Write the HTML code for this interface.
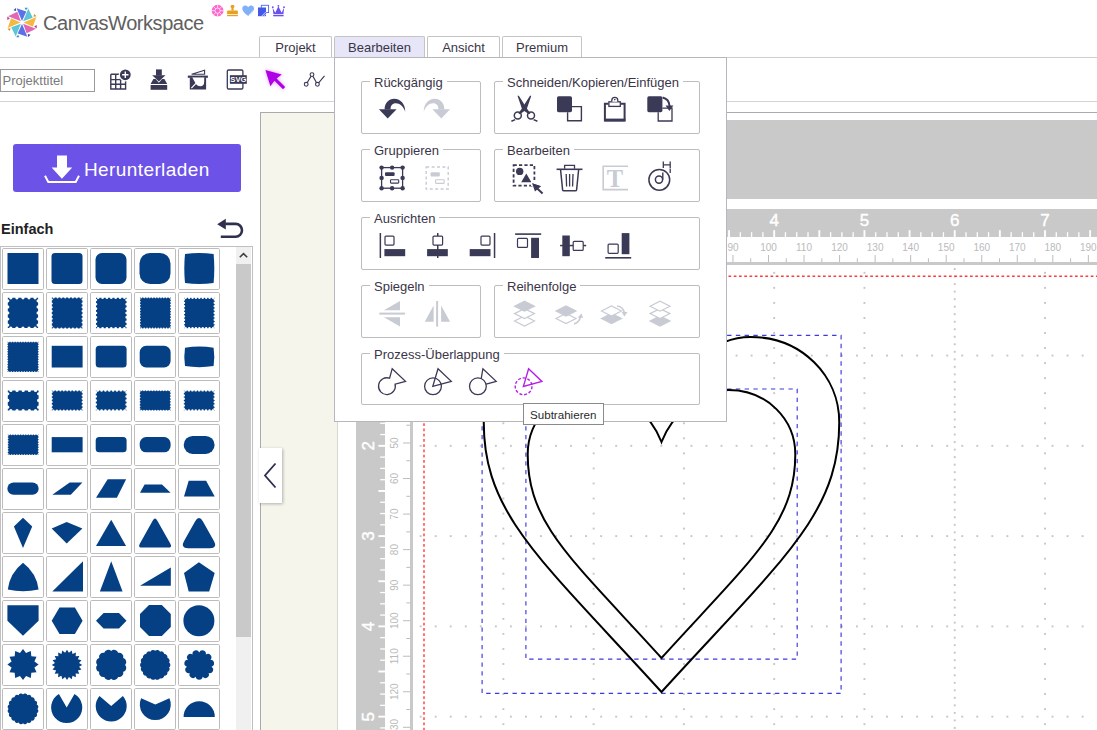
<!DOCTYPE html><html><head><meta charset="utf-8"><style>
*{margin:0;padding:0;box-sizing:border-box}
html,body{width:1097px;height:730px;overflow:hidden;background:#fff;font-family:"Liberation Sans",sans-serif}
.a{position:absolute}
svg{position:absolute;overflow:visible}
.tab{position:absolute;top:36px;height:21px;border:1px solid #c4c4c4;border-bottom:none;border-radius:2px 2px 0 0;background:#fff;font-size:13px;color:#3b3548;text-align:center;line-height:21px}
.grp{position:absolute;border:1px solid #bdbdbd;border-radius:2px}
.gl{position:absolute;background:#fff;font-size:13px;color:#3b3548;padding:0 4px;line-height:14px;white-space:nowrap}
.cell{position:absolute;width:42px;height:41px;border:1px solid #c4c4c4;background:#fff}
</style></head><body>

<svg class="a" style="left:0;top:0" width="45" height="45"><g transform="translate(22,22.5)"><polygon points="-5.40,-14.30 4.30,-10.90 0.00,-1.60" fill="#5a72e8"/><polygon points="-8.60,-12.20 -6.20,-14.60 -5.80,-11.40" fill="#3c4aa8"/><polygon points="6.29,-13.93 10.75,-4.67 1.13,-1.13" fill="#5ec4d8"/><polygon points="2.55,-14.71 5.94,-14.71 3.96,-12.16" fill="#3d9aa8"/><polygon points="14.30,-5.40 10.90,4.30 1.60,-0.00" fill="#f6b840"/><polygon points="12.20,-8.60 14.60,-6.20 11.40,-5.80" fill="#d88f2a"/><polygon points="13.93,6.29 4.67,10.75 1.13,1.13" fill="#e167b6"/><polygon points="14.71,2.55 14.71,5.94 12.16,3.96" fill="#b0389a"/><polygon points="5.40,14.30 -4.30,10.90 0.00,1.60" fill="#5a72e8"/><polygon points="8.60,12.20 6.20,14.60 5.80,11.40" fill="#3c4aa8"/><polygon points="-6.29,13.93 -10.75,4.67 -1.13,1.13" fill="#5ec4d8"/><polygon points="-2.55,14.71 -5.94,14.71 -3.96,12.16" fill="#3d9aa8"/><polygon points="-14.30,5.40 -10.90,-4.30 -1.60,0.00" fill="#f6b840"/><polygon points="-12.20,8.60 -14.60,6.20 -11.40,5.80" fill="#d88f2a"/><polygon points="-13.93,-6.29 -4.67,-10.75 -1.13,-1.13" fill="#e167b6"/><polygon points="-14.71,-2.55 -14.71,-5.94 -12.16,-3.96" fill="#b0389a"/></g></svg>
<div class="a" style="left:43px;top:11px;font-size:20px;line-height:24px;color:#606060;letter-spacing:-0.45px;white-space:nowrap">CanvasWorkspace</div>
<svg class="a" style="left:0;top:0" width="300" height="22">
<circle cx="217.6" cy="10.7" r="5.9" fill="#ff66cc"/>
<g stroke="#fff" stroke-width="0.7" fill="none"><circle cx="217.6" cy="10.7" r="2.6"/><path d="M217.6 4.8 V8.1 M217.6 13.3 V16.6 M211.7 10.7 H215 M220.2 10.7 H223.5 M213.4 6.5 L215.8 8.9 M219.4 12.5 L221.8 14.9 M221.8 6.5 L219.4 8.9 M215.8 12.5 L213.4 14.9"/></g>
<g fill="#e8a020"><rect x="230.6" y="4.9" width="3.8" height="3.2" rx="1.4"/><path d="M231.4 8 H233.6 V10.6 H231.4Z"/><path d="M228.2 10.6 H236.8 Q237.9 10.6 237.9 11.7 V14 H227.1 V11.7 Q227.1 10.6 228.2 10.6Z"/><rect x="227.1" y="14.8" width="10.8" height="1.4"/></g>
<path d="M248.2 7.2 C246.8 4.6 242.3 4.6 242.3 8.4 C242.3 11.6 246 14 248.2 15.9 C250.4 14 254 11.6 254 8.4 C254 4.6 249.6 4.6 248.2 7.2Z" fill="#80b0f8"/>
<path d="M252.6 10.6 C252 12.4 250.6 13.6 248.8 15" stroke="#fff" stroke-width="0.6" fill="none"/>
<rect x="261.3" y="5.3" width="7.3" height="7.3" fill="none" stroke="#4f66f0" stroke-width="0.9"/>
<rect x="258" y="7.5" width="8" height="8.7" fill="#4458e8"/>
<path d="M261.8 16 L266 11.8 M263.8 16 L266 13.8" stroke="#fff" stroke-width="0.7"/>
<path d="M272.6 7.5 L275.2 12.8 L278.4 6.2 L281.6 12.8 L284.2 7.5 L283.4 14 H273.4 Z" fill="#6a4ef0"/><circle cx="272.8" cy="7.2" r="0.9" fill="#6a4ef0"/><circle cx="278.4" cy="5.8" r="0.9" fill="#6a4ef0"/><circle cx="284" cy="7.2" r="0.9" fill="#6a4ef0"/>
<rect x="273.2" y="14.8" width="10.4" height="1.5" fill="#6a4ef0"/>
</svg>
<div class="tab" style="left:259px;width:73px">Projekt</div>
<div class="tab" style="left:334px;width:91px;background:#e6e6f8">Bearbeiten</div>
<div class="tab" style="left:427px;width:73px">Ansicht</div>
<div class="tab" style="left:502px;width:80px">Premium</div>
<div class="a" style="left:0;top:57px;width:1097px;height:1px;background:#cfcfcf"></div>
<div class="a" style="left:0;top:69px;width:95px;height:23px;border:1px solid #9a9a9a;font-size:13px;color:#7a7a7a;padding-left:1.5px;line-height:21px">Projekttitel</div>
<div class="a" style="left:0;top:101px;width:1097px;height:1px;background:#d4d4d4"></div>
<svg class="a" style="left:0;top:0" width="340" height="100">
<defs><filter id="glow" x="-50%" y="-50%" width="200%" height="200%"><feGaussianBlur stdDeviation="2.2"/></filter></defs>
<g fill="#3a3956">
<path d="M110.8 79.6 V89 H125.6 V79.6 M110.8 74.3 H120.4 M110.8 74.3 V79.6 M110.8 79.6 H125.6 M110.8 84.3 H125.6 M115.7 74.3 V89 M120.6 74.3 V89" fill="none" stroke="#3a3956" stroke-width="1.4"/>
</g>
<circle cx="125.3" cy="74.8" r="6.6" fill="#fff"/>
<g fill="#3a3956"><circle cx="125.3" cy="74.8" r="5.4"/>
</g>
<path d="M125.3 71.6 V78 M122.1 74.8 H128.5" stroke="#fff" stroke-width="1.4"/>
<g fill="#3a3956">
<rect x="156" y="69.4" width="5.8" height="6.2"/>
<polygon points="152.2,75.2 165.5,75.2 158.85,81.4"/>
<polygon points="150.6,84 153.4,79 155.6,79 158.85,82.8 162.1,79 164.4,79 167.2,84"/>
<rect x="150.6" y="85" width="16.6" height="4.8"/>
</g>
<g>
<path d="M191.6 74.3 L204.6 70.2 L204.6 74.3 Z" fill="none" stroke="#3a3956" stroke-width="1.1"/>
<rect x="187.8" y="75.6" width="20.1" height="2.2" fill="#3a3956"/>
<rect x="189.8" y="77.6" width="16.3" height="11.9" fill="#3a3956"/>
<path d="M192.3 77.6 H204.2 V81.5 Q204.2 86.2 200.3 86.2 Q197.2 86.2 195.4 83 Z" fill="#fff"/>
<path d="M191.4 88.2 L196.4 82.8" stroke="#fff" stroke-width="1.2"/>
</g>
<rect x="227.3" y="70" width="15.6" height="19" rx="1.3" fill="none" stroke="#3a3956" stroke-width="1.3"/>
<rect x="229.9" y="75.2" width="16.9" height="8.6" fill="#3a3956"/>
<text x="238.35" y="82.3" font-size="7.6" font-weight="bold" fill="#fff" text-anchor="middle" font-family="Liberation Sans">SVG</text>
<g opacity="0.55" filter="url(#glow)"><polygon points="265.4,70.1 281.8,74.4 276.6,78.6 285.2,87 283,89.2 274.4,80.8 270.4,86.2" fill="#c850ff"/></g>
<polygon points="265.4,70.1 281.8,74.4 276.6,78.6 285.2,87 283,89.2 274.4,80.8 270.4,86.2" fill="#b000e6"/>
<path d="M306.2 84.3 L312 74.6 L317.4 84.3 L324.5 75.8" fill="none" stroke="#3a3956" stroke-width="1.15"/>
<g fill="#fff" stroke="#3a3956" stroke-width="1.1"><circle cx="306.2" cy="84.3" r="1.9"/><circle cx="312" cy="74.6" r="1.9"/><circle cx="317.4" cy="84.3" r="1.9"/></g>
</svg>
<div class="a" style="left:13px;top:144px;width:228px;height:48px;background:#6d52e8;border-radius:3px"></div>
<svg class="a" style="left:0;top:0" width="260" height="250">
<rect x="57" y="155.5" width="10" height="13" fill="#fff"/>
<polygon points="51.6,167.5 72.2,167.5 61.9,178.8" fill="#fff"/>
<path d="M45 175.8 L48.3 182 H75.7 L79 175.8" fill="none" stroke="#fff" stroke-width="2"/>
<path d="M225.2 223.9 H235.6 A6.4 6.4 0 0 1 235.6 236.7 H220.8" fill="none" stroke="#2f2f4f" stroke-width="2.6"/>
<polygon points="217.2,224.2 225.8,218.8 225.8,229.6" fill="#2f2f4f"/>
</svg>
<div class="a" style="left:84px;top:159px;font-size:19px;line-height:22px;color:#fff;letter-spacing:0.4px;white-space:nowrap">Herunterladen</div>
<div class="a" style="left:1px;top:221px;font-size:14.5px;line-height:17px;color:#222;font-weight:bold;white-space:nowrap">Einfach</div>
<div class="a" style="left:0;top:246px;width:253px;height:500px;border:1px solid #c0c0c0;background:#fff"></div>
<div class="a" style="left:236px;top:247px;width:15px;height:483px;background:#f0f0f0"></div>
<div class="a" style="left:236px;top:264px;width:15px;height:373px;background:#c9c9c9"></div>
<svg class="a" style="left:236px;top:247px" width="15" height="17"><path d="M3.8 10.3 L7.5 6.6 L11.2 10.3" fill="none" stroke="#404040" stroke-width="1.6"/></svg>
<svg class="a" style="left:0;top:0" width="260" height="730"><rect x="2.5" y="248.5" width="41" height="41" rx="1.2" fill="#fff" stroke="#bcbcbc" stroke-width="1"/><g transform="translate(2,248)" fill="#053f84"><rect x="5.5" y="5" width="31.0" height="31" rx="0"/></g><rect x="46.5" y="248.5" width="41" height="41" rx="1.2" fill="#fff" stroke="#bcbcbc" stroke-width="1"/><g transform="translate(46,248)" fill="#053f84"><rect x="5.5" y="5" width="31.0" height="31" rx="3.5"/></g><rect x="90.5" y="248.5" width="41" height="41" rx="1.2" fill="#fff" stroke="#bcbcbc" stroke-width="1"/><g transform="translate(90,248)" fill="#053f84"><rect x="5.5" y="5" width="31.0" height="31" rx="6.5"/></g><rect x="134.5" y="248.5" width="41" height="41" rx="1.2" fill="#fff" stroke="#bcbcbc" stroke-width="1"/><g transform="translate(134,248)" fill="#053f84"><rect x="5.5" y="5" width="31.0" height="31" rx="10.5"/></g><rect x="178.5" y="248.5" width="41" height="41" rx="1.2" fill="#fff" stroke="#bcbcbc" stroke-width="1"/><g transform="translate(178,248)" fill="#053f84"><path d="M7,6.1 Q21.3,3.9 35.6,6.1 Q37.0,20.55 35.6,35.0 Q21.3,37.2 7,35.0 Q5.6,20.55 7,6.1 Z"/></g><rect x="2.5" y="292.5" width="41" height="41" rx="1.2" fill="#fff" stroke="#bcbcbc" stroke-width="1"/><g transform="translate(2,292)" fill="#053f84"><path d="M5.8,5.8 L7.23,5.8 A1.6,1.6 0 0 0 10.43,5.8 L13.29,5.8 A1.6,1.6 0 0 0 16.49,5.8 L19.35,5.8 A1.6,1.6 0 0 0 22.55,5.8 L25.41,5.8 A1.6,1.6 0 0 0 28.61,5.8 L31.47,5.8 A1.6,1.6 0 0 0 34.67,5.8 L36.1,5.8 L36.1,7.23 A1.6,1.6 0 0 0 36.1,10.43 L36.1,13.29 A1.6,1.6 0 0 0 36.1,16.49 L36.1,19.35 A1.6,1.6 0 0 0 36.1,22.55 L36.1,25.41 A1.6,1.6 0 0 0 36.1,28.61 L36.1,31.47 A1.6,1.6 0 0 0 36.1,34.67 L36.1,36.1 L34.67,36.1 A1.6,1.6 0 0 0 31.47,36.1 L28.61,36.1 A1.6,1.6 0 0 0 25.41,36.1 L22.55,36.1 A1.6,1.6 0 0 0 19.35,36.1 L16.49,36.1 A1.6,1.6 0 0 0 13.29,36.1 L10.43,36.1 A1.6,1.6 0 0 0 7.23,36.1 L5.8,36.1 L5.8,34.67 A1.6,1.6 0 0 0 5.8,31.47 L5.8,28.61 A1.6,1.6 0 0 0 5.8,25.41 L5.8,22.55 A1.6,1.6 0 0 0 5.8,19.35 L5.8,16.49 A1.6,1.6 0 0 0 5.8,13.29 L5.8,10.43 A1.6,1.6 0 0 0 5.8,7.23 Z"/></g><rect x="46.5" y="292.5" width="41" height="41" rx="1.2" fill="#fff" stroke="#bcbcbc" stroke-width="1"/><g transform="translate(46,292)" fill="#053f84"><path d="M5.8,5.6 L6.72,5.6 A1.0,1.0 0 0 0 8.72,5.6 L10.56,5.6 A1.0,1.0 0 0 0 12.56,5.6 L14.39,5.6 A1.0,1.0 0 0 0 16.39,5.6 L18.23,5.6 A1.0,1.0 0 0 0 20.23,5.6 L22.07,5.6 A1.0,1.0 0 0 0 24.07,5.6 L25.91,5.6 A1.0,1.0 0 0 0 27.91,5.6 L29.74,5.6 A1.0,1.0 0 0 0 31.74,5.6 L33.58,5.6 A1.0,1.0 0 0 0 35.58,5.6 L36.5,5.6 L36.5,6.52 A1.0,1.0 0 0 0 36.5,8.52 L36.5,10.38 A1.0,1.0 0 0 0 36.5,12.38 L36.5,14.22 A1.0,1.0 0 0 0 36.5,16.23 L36.5,18.07 A1.0,1.0 0 0 0 36.5,20.07 L36.5,21.92 A1.0,1.0 0 0 0 36.5,23.92 L36.5,25.77 A1.0,1.0 0 0 0 36.5,27.77 L36.5,29.62 A1.0,1.0 0 0 0 36.5,31.62 L36.5,33.47 A1.0,1.0 0 0 0 36.5,35.47 L36.5,36.4 L35.58,36.4 A1.0,1.0 0 0 0 33.58,36.4 L31.74,36.4 A1.0,1.0 0 0 0 29.74,36.4 L27.91,36.4 A1.0,1.0 0 0 0 25.91,36.4 L24.07,36.4 A1.0,1.0 0 0 0 22.07,36.4 L20.23,36.4 A1.0,1.0 0 0 0 18.23,36.4 L16.39,36.4 A1.0,1.0 0 0 0 14.39,36.4 L12.56,36.4 A1.0,1.0 0 0 0 10.56,36.4 L8.72,36.4 A1.0,1.0 0 0 0 6.72,36.4 L5.8,36.4 L5.8,35.48 A1.0,1.0 0 0 0 5.8,33.48 L5.8,31.62 A1.0,1.0 0 0 0 5.8,29.62 L5.8,27.77 A1.0,1.0 0 0 0 5.8,25.77 L5.8,23.93 A1.0,1.0 0 0 0 5.8,21.93 L5.8,20.07 A1.0,1.0 0 0 0 5.8,18.07 L5.8,16.23 A1.0,1.0 0 0 0 5.8,14.23 L5.8,12.38 A1.0,1.0 0 0 0 5.8,10.38 L5.8,8.53 A1.0,1.0 0 0 0 5.8,6.53 Z"/></g><rect x="90.5" y="292.5" width="41" height="41" rx="1.2" fill="#fff" stroke="#bcbcbc" stroke-width="1"/><g transform="translate(90,292)" fill="#053f84"><path d="M6,5.8 L6.89,5.8 A1.3,1.3 0 0 0 9.49,5.8 L11.26,5.8 A1.3,1.3 0 0 0 13.86,5.8 L15.63,5.8 A1.3,1.3 0 0 0 18.23,5.8 L20.00,5.8 A1.3,1.3 0 0 0 22.60,5.8 L24.37,5.8 A1.3,1.3 0 0 0 26.97,5.8 L28.74,5.8 A1.3,1.3 0 0 0 31.34,5.8 L33.11,5.8 A1.3,1.3 0 0 0 35.71,5.8 L36.6,5.8 L36.6,6.67 A1.3,1.3 0 0 0 36.6,9.27 L36.6,11.01 A1.3,1.3 0 0 0 36.6,13.61 L36.6,15.36 A1.3,1.3 0 0 0 36.6,17.96 L36.6,19.70 A1.3,1.3 0 0 0 36.6,22.30 L36.6,24.04 A1.3,1.3 0 0 0 36.6,26.64 L36.6,28.39 A1.3,1.3 0 0 0 36.6,30.99 L36.6,32.73 A1.3,1.3 0 0 0 36.6,35.33 L36.6,36.2 L35.71,36.2 A1.3,1.3 0 0 0 33.11,36.2 L31.34,36.2 A1.3,1.3 0 0 0 28.74,36.2 L26.97,36.2 A1.3,1.3 0 0 0 24.37,36.2 L22.60,36.2 A1.3,1.3 0 0 0 20.00,36.2 L18.23,36.2 A1.3,1.3 0 0 0 15.63,36.2 L13.86,36.2 A1.3,1.3 0 0 0 11.26,36.2 L9.49,36.2 A1.3,1.3 0 0 0 6.89,36.2 L6,36.2 L6,35.33 A1.3,1.3 0 0 0 6,32.73 L6,30.99 A1.3,1.3 0 0 0 6,28.39 L6,26.64 A1.3,1.3 0 0 0 6,24.04 L6,22.30 A1.3,1.3 0 0 0 6,19.70 L6,17.96 A1.3,1.3 0 0 0 6,15.36 L6,13.61 A1.3,1.3 0 0 0 6,11.01 L6,9.27 A1.3,1.3 0 0 0 6,6.67 Z"/></g><rect x="134.5" y="292.5" width="41" height="41" rx="1.2" fill="#fff" stroke="#bcbcbc" stroke-width="1"/><g transform="translate(134,292)" fill="#053f84"><path d="M6,5.6 L6.60,5.6 A0.8,0.8 0 0 0 8.20,5.6 L9.40,5.6 A0.8,0.8 0 0 0 11.00,5.6 L12.20,5.6 A0.8,0.8 0 0 0 13.80,5.6 L15.00,5.6 A0.8,0.8 0 0 0 16.60,5.6 L17.80,5.6 A0.8,0.8 0 0 0 19.40,5.6 L20.60,5.6 A0.8,0.8 0 0 0 22.20,5.6 L23.40,5.6 A0.8,0.8 0 0 0 25.00,5.6 L26.20,5.6 A0.8,0.8 0 0 0 27.80,5.6 L29.00,5.6 A0.8,0.8 0 0 0 30.60,5.6 L31.80,5.6 A0.8,0.8 0 0 0 33.40,5.6 L34.60,5.6 A0.8,0.8 0 0 0 36.20,5.6 L36.8,5.6 L36.8,6.20 A0.8,0.8 0 0 0 36.8,7.80 L36.8,9.00 A0.8,0.8 0 0 0 36.8,10.60 L36.8,11.80 A0.8,0.8 0 0 0 36.8,13.40 L36.8,14.60 A0.8,0.8 0 0 0 36.8,16.20 L36.8,17.40 A0.8,0.8 0 0 0 36.8,19.00 L36.8,20.20 A0.8,0.8 0 0 0 36.8,21.80 L36.8,23.00 A0.8,0.8 0 0 0 36.8,24.60 L36.8,25.80 A0.8,0.8 0 0 0 36.8,27.40 L36.8,28.60 A0.8,0.8 0 0 0 36.8,30.20 L36.8,31.40 A0.8,0.8 0 0 0 36.8,33.00 L36.8,34.20 A0.8,0.8 0 0 0 36.8,35.80 L36.8,36.4 L36.20,36.4 A0.8,0.8 0 0 0 34.60,36.4 L33.40,36.4 A0.8,0.8 0 0 0 31.80,36.4 L30.60,36.4 A0.8,0.8 0 0 0 29.00,36.4 L27.80,36.4 A0.8,0.8 0 0 0 26.20,36.4 L25.00,36.4 A0.8,0.8 0 0 0 23.40,36.4 L22.20,36.4 A0.8,0.8 0 0 0 20.60,36.4 L19.40,36.4 A0.8,0.8 0 0 0 17.80,36.4 L16.60,36.4 A0.8,0.8 0 0 0 15.00,36.4 L13.80,36.4 A0.8,0.8 0 0 0 12.20,36.4 L11.00,36.4 A0.8,0.8 0 0 0 9.40,36.4 L8.20,36.4 A0.8,0.8 0 0 0 6.60,36.4 L6,36.4 L6,35.80 A0.8,0.8 0 0 0 6,34.20 L6,33.00 A0.8,0.8 0 0 0 6,31.40 L6,30.20 A0.8,0.8 0 0 0 6,28.60 L6,27.40 A0.8,0.8 0 0 0 6,25.80 L6,24.60 A0.8,0.8 0 0 0 6,23.00 L6,21.80 A0.8,0.8 0 0 0 6,20.20 L6,19.00 A0.8,0.8 0 0 0 6,17.40 L6,16.20 A0.8,0.8 0 0 0 6,14.60 L6,13.40 A0.8,0.8 0 0 0 6,11.80 L6,10.60 A0.8,0.8 0 0 0 6,9.00 L6,7.80 A0.8,0.8 0 0 0 6,6.20 Z"/></g><rect x="178.5" y="292.5" width="41" height="41" rx="1.2" fill="#fff" stroke="#bcbcbc" stroke-width="1"/><g transform="translate(178,292)" fill="#053f84"><path d="M6,5.8 L6.51,5.8 A1.2,1.2 0 0 0 8.91,5.8 L9.92,5.8 A1.2,1.2 0 0 0 12.32,5.8 L13.33,5.8 A1.2,1.2 0 0 0 15.73,5.8 L16.74,5.8 A1.2,1.2 0 0 0 19.14,5.8 L20.15,5.8 A1.2,1.2 0 0 0 22.55,5.8 L23.56,5.8 A1.2,1.2 0 0 0 25.96,5.8 L26.97,5.8 A1.2,1.2 0 0 0 29.37,5.8 L30.38,5.8 A1.2,1.2 0 0 0 32.78,5.8 L33.79,5.8 A1.2,1.2 0 0 0 36.19,5.8 L36.7,5.8 L36.7,6.29 A1.2,1.2 0 0 0 36.7,8.69 L36.7,9.67 A1.2,1.2 0 0 0 36.7,12.07 L36.7,13.04 A1.2,1.2 0 0 0 36.7,15.44 L36.7,16.42 A1.2,1.2 0 0 0 36.7,18.82 L36.7,19.80 A1.2,1.2 0 0 0 36.7,22.20 L36.7,23.18 A1.2,1.2 0 0 0 36.7,25.58 L36.7,26.56 A1.2,1.2 0 0 0 36.7,28.96 L36.7,29.93 A1.2,1.2 0 0 0 36.7,32.33 L36.7,33.31 A1.2,1.2 0 0 0 36.7,35.71 L36.7,36.2 L36.19,36.2 A1.2,1.2 0 0 0 33.79,36.2 L32.78,36.2 A1.2,1.2 0 0 0 30.38,36.2 L29.37,36.2 A1.2,1.2 0 0 0 26.97,36.2 L25.96,36.2 A1.2,1.2 0 0 0 23.56,36.2 L22.55,36.2 A1.2,1.2 0 0 0 20.15,36.2 L19.14,36.2 A1.2,1.2 0 0 0 16.74,36.2 L15.73,36.2 A1.2,1.2 0 0 0 13.33,36.2 L12.32,36.2 A1.2,1.2 0 0 0 9.92,36.2 L8.91,36.2 A1.2,1.2 0 0 0 6.51,36.2 L6,36.2 L6,35.71 A1.2,1.2 0 0 0 6,33.31 L6,32.33 A1.2,1.2 0 0 0 6,29.93 L6,28.96 A1.2,1.2 0 0 0 6,26.56 L6,25.58 A1.2,1.2 0 0 0 6,23.18 L6,22.20 A1.2,1.2 0 0 0 6,19.80 L6,18.82 A1.2,1.2 0 0 0 6,16.42 L6,15.44 A1.2,1.2 0 0 0 6,13.04 L6,12.07 A1.2,1.2 0 0 0 6,9.67 L6,8.69 A1.2,1.2 0 0 0 6,6.29 Z"/></g><rect x="2.5" y="336.5" width="41" height="41" rx="1.2" fill="#fff" stroke="#bcbcbc" stroke-width="1"/><g transform="translate(2,336)" fill="#053f84"><path d="M5.4,5.7 L5.90,5.7 A0.8,0.8 0 0 0 7.50,5.7 L8.50,5.7 A0.8,0.8 0 0 0 10.10,5.7 L11.10,5.7 A0.8,0.8 0 0 0 12.70,5.7 L13.70,5.7 A0.8,0.8 0 0 0 15.30,5.7 L16.30,5.7 A0.8,0.8 0 0 0 17.90,5.7 L18.90,5.7 A0.8,0.8 0 0 0 20.50,5.7 L21.50,5.7 A0.8,0.8 0 0 0 23.10,5.7 L24.10,5.7 A0.8,0.8 0 0 0 25.70,5.7 L26.70,5.7 A0.8,0.8 0 0 0 28.30,5.7 L29.30,5.7 A0.8,0.8 0 0 0 30.90,5.7 L31.90,5.7 A0.8,0.8 0 0 0 33.50,5.7 L34.50,5.7 A0.8,0.8 0 0 0 36.10,5.7 L36.6,5.7 L36.6,6.16 A0.8,0.8 0 0 0 36.6,7.76 L36.6,8.69 A0.8,0.8 0 0 0 36.6,10.29 L36.6,11.21 A0.8,0.8 0 0 0 36.6,12.81 L36.6,13.74 A0.8,0.8 0 0 0 36.6,15.34 L36.6,16.26 A0.8,0.8 0 0 0 36.6,17.86 L36.6,18.79 A0.8,0.8 0 0 0 36.6,20.39 L36.6,21.31 A0.8,0.8 0 0 0 36.6,22.91 L36.6,23.84 A0.8,0.8 0 0 0 36.6,25.44 L36.6,26.36 A0.8,0.8 0 0 0 36.6,27.96 L36.6,28.89 A0.8,0.8 0 0 0 36.6,30.49 L36.6,31.41 A0.8,0.8 0 0 0 36.6,33.01 L36.6,33.94 A0.8,0.8 0 0 0 36.6,35.54 L36.6,36 L36.10,36 A0.8,0.8 0 0 0 34.50,36 L33.50,36 A0.8,0.8 0 0 0 31.90,36 L30.90,36 A0.8,0.8 0 0 0 29.30,36 L28.30,36 A0.8,0.8 0 0 0 26.70,36 L25.70,36 A0.8,0.8 0 0 0 24.10,36 L23.10,36 A0.8,0.8 0 0 0 21.50,36 L20.50,36 A0.8,0.8 0 0 0 18.90,36 L17.90,36 A0.8,0.8 0 0 0 16.30,36 L15.30,36 A0.8,0.8 0 0 0 13.70,36 L12.70,36 A0.8,0.8 0 0 0 11.10,36 L10.10,36 A0.8,0.8 0 0 0 8.50,36 L7.50,36 A0.8,0.8 0 0 0 5.90,36 L5.4,36 L5.4,35.54 A0.8,0.8 0 0 0 5.4,33.94 L5.4,33.01 A0.8,0.8 0 0 0 5.4,31.41 L5.4,30.49 A0.8,0.8 0 0 0 5.4,28.89 L5.4,27.96 A0.8,0.8 0 0 0 5.4,26.36 L5.4,25.44 A0.8,0.8 0 0 0 5.4,23.84 L5.4,22.91 A0.8,0.8 0 0 0 5.4,21.31 L5.4,20.39 A0.8,0.8 0 0 0 5.4,18.79 L5.4,17.86 A0.8,0.8 0 0 0 5.4,16.26 L5.4,15.34 A0.8,0.8 0 0 0 5.4,13.74 L5.4,12.81 A0.8,0.8 0 0 0 5.4,11.21 L5.4,10.29 A0.8,0.8 0 0 0 5.4,8.69 L5.4,7.76 A0.8,0.8 0 0 0 5.4,6.16 Z"/></g><rect x="46.5" y="336.5" width="41" height="41" rx="1.2" fill="#fff" stroke="#bcbcbc" stroke-width="1"/><g transform="translate(46,336)" fill="#053f84"><rect x="5.7" y="9.8" width="30.900000000000002" height="21.7" rx="0"/></g><rect x="90.5" y="336.5" width="41" height="41" rx="1.2" fill="#fff" stroke="#bcbcbc" stroke-width="1"/><g transform="translate(90,336)" fill="#053f84"><rect x="5.7" y="9.8" width="30.900000000000002" height="21.7" rx="3.5"/></g><rect x="134.5" y="336.5" width="41" height="41" rx="1.2" fill="#fff" stroke="#bcbcbc" stroke-width="1"/><g transform="translate(134,336)" fill="#053f84"><rect x="5.7" y="9.8" width="30.900000000000002" height="21.7" rx="6.5"/></g><rect x="178.5" y="336.5" width="41" height="41" rx="1.2" fill="#fff" stroke="#bcbcbc" stroke-width="1"/><g transform="translate(178,336)" fill="#053f84"><path d="M7,11.7 Q21.3,9.5 35.6,11.7 Q37.0,20.9 35.6,30.099999999999998 Q21.3,32.3 7,30.099999999999998 Q5.6,20.9 7,11.7 Z"/></g><rect x="2.5" y="380.5" width="41" height="41" rx="1.2" fill="#fff" stroke="#bcbcbc" stroke-width="1"/><g transform="translate(2,380)" fill="#053f84"><path d="M5.8,10.4 L7.28,10.4 A1.6,1.6 0 0 0 10.48,10.4 L13.44,10.4 A1.6,1.6 0 0 0 16.64,10.4 L19.60,10.4 A1.6,1.6 0 0 0 22.80,10.4 L25.76,10.4 A1.6,1.6 0 0 0 28.96,10.4 L31.92,10.4 A1.6,1.6 0 0 0 35.12,10.4 L36.6,10.4 L36.6,12.15 A1.6,1.6 0 0 0 36.6,15.35 L36.6,18.85 A1.6,1.6 0 0 0 36.6,22.05 L36.6,25.55 A1.6,1.6 0 0 0 36.6,28.75 L36.6,30.5 L35.12,30.5 A1.6,1.6 0 0 0 31.92,30.5 L28.96,30.5 A1.6,1.6 0 0 0 25.76,30.5 L22.80,30.5 A1.6,1.6 0 0 0 19.60,30.5 L16.64,30.5 A1.6,1.6 0 0 0 13.44,30.5 L10.48,30.5 A1.6,1.6 0 0 0 7.28,30.5 L5.8,30.5 L5.8,28.75 A1.6,1.6 0 0 0 5.8,25.55 L5.8,22.05 A1.6,1.6 0 0 0 5.8,18.85 L5.8,15.35 A1.6,1.6 0 0 0 5.8,12.15 Z"/></g><rect x="46.5" y="380.5" width="41" height="41" rx="1.2" fill="#fff" stroke="#bcbcbc" stroke-width="1"/><g transform="translate(46,380)" fill="#053f84"><path d="M5.8,10.4 L6.51,10.4 A1.0,1.0 0 0 0 8.51,10.4 L9.93,10.4 A1.0,1.0 0 0 0 11.93,10.4 L13.36,10.4 A1.0,1.0 0 0 0 15.36,10.4 L16.78,10.4 A1.0,1.0 0 0 0 18.78,10.4 L20.20,10.4 A1.0,1.0 0 0 0 22.20,10.4 L23.62,10.4 A1.0,1.0 0 0 0 25.62,10.4 L27.04,10.4 A1.0,1.0 0 0 0 29.04,10.4 L30.47,10.4 A1.0,1.0 0 0 0 32.47,10.4 L33.89,10.4 A1.0,1.0 0 0 0 35.89,10.4 L36.6,10.4 L36.6,11.08 A1.0,1.0 0 0 0 36.6,13.08 L36.6,14.43 A1.0,1.0 0 0 0 36.6,16.43 L36.6,17.77 A1.0,1.0 0 0 0 36.6,19.77 L36.6,21.12 A1.0,1.0 0 0 0 36.6,23.12 L36.6,24.48 A1.0,1.0 0 0 0 36.6,26.48 L36.6,27.83 A1.0,1.0 0 0 0 36.6,29.83 L36.6,30.5 L35.89,30.5 A1.0,1.0 0 0 0 33.89,30.5 L32.47,30.5 A1.0,1.0 0 0 0 30.47,30.5 L29.04,30.5 A1.0,1.0 0 0 0 27.04,30.5 L25.62,30.5 A1.0,1.0 0 0 0 23.62,30.5 L22.20,30.5 A1.0,1.0 0 0 0 20.20,30.5 L18.78,30.5 A1.0,1.0 0 0 0 16.78,30.5 L15.36,30.5 A1.0,1.0 0 0 0 13.36,30.5 L11.93,30.5 A1.0,1.0 0 0 0 9.93,30.5 L8.51,30.5 A1.0,1.0 0 0 0 6.51,30.5 L5.8,30.5 L5.8,29.82 A1.0,1.0 0 0 0 5.8,27.82 L5.8,26.48 A1.0,1.0 0 0 0 5.8,24.48 L5.8,23.12 A1.0,1.0 0 0 0 5.8,21.12 L5.8,19.77 A1.0,1.0 0 0 0 5.8,17.77 L5.8,16.42 A1.0,1.0 0 0 0 5.8,14.42 L5.8,13.07 A1.0,1.0 0 0 0 5.8,11.07 Z"/></g><rect x="90.5" y="380.5" width="41" height="41" rx="1.2" fill="#fff" stroke="#bcbcbc" stroke-width="1"/><g transform="translate(90,380)" fill="#053f84"><path d="M5.8,10.4 L6.42,10.4 A1.3,1.3 0 0 0 9.03,10.4 L10.27,10.4 A1.3,1.3 0 0 0 12.88,10.4 L14.12,10.4 A1.3,1.3 0 0 0 16.73,10.4 L17.97,10.4 A1.3,1.3 0 0 0 20.57,10.4 L21.82,10.4 A1.3,1.3 0 0 0 24.43,10.4 L25.68,10.4 A1.3,1.3 0 0 0 28.28,10.4 L29.53,10.4 A1.3,1.3 0 0 0 32.12,10.4 L33.38,10.4 A1.3,1.3 0 0 0 35.97,10.4 L36.6,10.4 L36.6,11.11 A1.3,1.3 0 0 0 36.6,13.71 L36.6,15.13 A1.3,1.3 0 0 0 36.6,17.73 L36.6,19.15 A1.3,1.3 0 0 0 36.6,21.75 L36.6,23.17 A1.3,1.3 0 0 0 36.6,25.77 L36.6,27.19 A1.3,1.3 0 0 0 36.6,29.79 L36.6,30.5 L35.98,30.5 A1.3,1.3 0 0 0 33.38,30.5 L32.12,30.5 A1.3,1.3 0 0 0 29.53,30.5 L28.28,30.5 A1.3,1.3 0 0 0 25.68,30.5 L24.43,30.5 A1.3,1.3 0 0 0 21.82,30.5 L20.58,30.5 A1.3,1.3 0 0 0 17.98,30.5 L16.73,30.5 A1.3,1.3 0 0 0 14.12,30.5 L12.88,30.5 A1.3,1.3 0 0 0 10.27,30.5 L9.03,30.5 A1.3,1.3 0 0 0 6.43,30.5 L5.8,30.5 L5.8,29.79 A1.3,1.3 0 0 0 5.8,27.19 L5.8,25.77 A1.3,1.3 0 0 0 5.8,23.17 L5.8,21.75 A1.3,1.3 0 0 0 5.8,19.15 L5.8,17.73 A1.3,1.3 0 0 0 5.8,15.13 L5.8,13.71 A1.3,1.3 0 0 0 5.8,11.11 Z"/></g><rect x="134.5" y="380.5" width="41" height="41" rx="1.2" fill="#fff" stroke="#bcbcbc" stroke-width="1"/><g transform="translate(134,380)" fill="#053f84"><path d="M5.8,10.4 L6.40,10.4 A0.8,0.8 0 0 0 8.00,10.4 L9.20,10.4 A0.8,0.8 0 0 0 10.80,10.4 L12.00,10.4 A0.8,0.8 0 0 0 13.60,10.4 L14.80,10.4 A0.8,0.8 0 0 0 16.40,10.4 L17.60,10.4 A0.8,0.8 0 0 0 19.20,10.4 L20.40,10.4 A0.8,0.8 0 0 0 22.00,10.4 L23.20,10.4 A0.8,0.8 0 0 0 24.80,10.4 L26.00,10.4 A0.8,0.8 0 0 0 27.60,10.4 L28.80,10.4 A0.8,0.8 0 0 0 30.40,10.4 L31.60,10.4 A0.8,0.8 0 0 0 33.20,10.4 L34.40,10.4 A0.8,0.8 0 0 0 36.00,10.4 L36.6,10.4 L36.6,11.04 A0.8,0.8 0 0 0 36.6,12.64 L36.6,13.91 A0.8,0.8 0 0 0 36.6,15.51 L36.6,16.78 A0.8,0.8 0 0 0 36.6,18.38 L36.6,19.65 A0.8,0.8 0 0 0 36.6,21.25 L36.6,22.52 A0.8,0.8 0 0 0 36.6,24.12 L36.6,25.39 A0.8,0.8 0 0 0 36.6,26.99 L36.6,28.26 A0.8,0.8 0 0 0 36.6,29.86 L36.6,30.5 L36.00,30.5 A0.8,0.8 0 0 0 34.40,30.5 L33.20,30.5 A0.8,0.8 0 0 0 31.60,30.5 L30.40,30.5 A0.8,0.8 0 0 0 28.80,30.5 L27.60,30.5 A0.8,0.8 0 0 0 26.00,30.5 L24.80,30.5 A0.8,0.8 0 0 0 23.20,30.5 L22.00,30.5 A0.8,0.8 0 0 0 20.40,30.5 L19.20,30.5 A0.8,0.8 0 0 0 17.60,30.5 L16.40,30.5 A0.8,0.8 0 0 0 14.80,30.5 L13.60,30.5 A0.8,0.8 0 0 0 12.00,30.5 L10.80,30.5 A0.8,0.8 0 0 0 9.20,30.5 L8.00,30.5 A0.8,0.8 0 0 0 6.40,30.5 L5.8,30.5 L5.8,29.86 A0.8,0.8 0 0 0 5.8,28.26 L5.8,26.99 A0.8,0.8 0 0 0 5.8,25.39 L5.8,24.12 A0.8,0.8 0 0 0 5.8,22.52 L5.8,21.25 A0.8,0.8 0 0 0 5.8,19.65 L5.8,18.38 A0.8,0.8 0 0 0 5.8,16.78 L5.8,15.51 A0.8,0.8 0 0 0 5.8,13.91 L5.8,12.64 A0.8,0.8 0 0 0 5.8,11.04 Z"/></g><rect x="178.5" y="380.5" width="41" height="41" rx="1.2" fill="#fff" stroke="#bcbcbc" stroke-width="1"/><g transform="translate(178,380)" fill="#053f84"><path d="M5.8,10.4 L6.31,10.4 A1.2,1.2 0 0 0 8.71,10.4 L9.73,10.4 A1.2,1.2 0 0 0 12.13,10.4 L13.16,10.4 A1.2,1.2 0 0 0 15.56,10.4 L16.58,10.4 A1.2,1.2 0 0 0 18.98,10.4 L20.00,10.4 A1.2,1.2 0 0 0 22.40,10.4 L23.42,10.4 A1.2,1.2 0 0 0 25.82,10.4 L26.84,10.4 A1.2,1.2 0 0 0 29.24,10.4 L30.27,10.4 A1.2,1.2 0 0 0 32.67,10.4 L33.69,10.4 A1.2,1.2 0 0 0 36.09,10.4 L36.6,10.4 L36.6,10.88 A1.2,1.2 0 0 0 36.6,13.28 L36.6,14.23 A1.2,1.2 0 0 0 36.6,16.62 L36.6,17.57 A1.2,1.2 0 0 0 36.6,19.97 L36.6,20.93 A1.2,1.2 0 0 0 36.6,23.32 L36.6,24.28 A1.2,1.2 0 0 0 36.6,26.68 L36.6,27.63 A1.2,1.2 0 0 0 36.6,30.03 L36.6,30.5 L36.09,30.5 A1.2,1.2 0 0 0 33.69,30.5 L32.67,30.5 A1.2,1.2 0 0 0 30.27,30.5 L29.24,30.5 A1.2,1.2 0 0 0 26.84,30.5 L25.82,30.5 A1.2,1.2 0 0 0 23.42,30.5 L22.40,30.5 A1.2,1.2 0 0 0 20.00,30.5 L18.98,30.5 A1.2,1.2 0 0 0 16.58,30.5 L15.56,30.5 A1.2,1.2 0 0 0 13.16,30.5 L12.13,30.5 A1.2,1.2 0 0 0 9.73,30.5 L8.71,30.5 A1.2,1.2 0 0 0 6.31,30.5 L5.8,30.5 L5.8,30.02 A1.2,1.2 0 0 0 5.8,27.62 L5.8,26.68 A1.2,1.2 0 0 0 5.8,24.28 L5.8,23.32 A1.2,1.2 0 0 0 5.8,20.93 L5.8,19.97 A1.2,1.2 0 0 0 5.8,17.57 L5.8,16.62 A1.2,1.2 0 0 0 5.8,14.22 L5.8,13.27 A1.2,1.2 0 0 0 5.8,10.88 Z"/></g><rect x="2.5" y="424.5" width="41" height="41" rx="1.2" fill="#fff" stroke="#bcbcbc" stroke-width="1"/><g transform="translate(2,424)" fill="#053f84"><path d="M5.8,10.5 L6.28,10.5 A0.8,0.8 0 0 0 7.88,10.5 L8.85,10.5 A0.8,0.8 0 0 0 10.45,10.5 L11.42,10.5 A0.8,0.8 0 0 0 13.02,10.5 L13.98,10.5 A0.8,0.8 0 0 0 15.58,10.5 L16.55,10.5 A0.8,0.8 0 0 0 18.15,10.5 L19.12,10.5 A0.8,0.8 0 0 0 20.72,10.5 L21.68,10.5 A0.8,0.8 0 0 0 23.28,10.5 L24.25,10.5 A0.8,0.8 0 0 0 25.85,10.5 L26.82,10.5 A0.8,0.8 0 0 0 28.42,10.5 L29.38,10.5 A0.8,0.8 0 0 0 30.98,10.5 L31.95,10.5 A0.8,0.8 0 0 0 33.55,10.5 L34.52,10.5 A0.8,0.8 0 0 0 36.12,10.5 L36.6,10.5 L36.6,10.98 A0.8,0.8 0 0 0 36.6,12.58 L36.6,13.54 A0.8,0.8 0 0 0 36.6,15.14 L36.6,16.11 A0.8,0.8 0 0 0 36.6,17.71 L36.6,18.67 A0.8,0.8 0 0 0 36.6,20.27 L36.6,21.23 A0.8,0.8 0 0 0 36.6,22.83 L36.6,23.79 A0.8,0.8 0 0 0 36.6,25.39 L36.6,26.36 A0.8,0.8 0 0 0 36.6,27.96 L36.6,28.92 A0.8,0.8 0 0 0 36.6,30.52 L36.6,31 L36.12,31 A0.8,0.8 0 0 0 34.52,31 L33.55,31 A0.8,0.8 0 0 0 31.95,31 L30.98,31 A0.8,0.8 0 0 0 29.38,31 L28.42,31 A0.8,0.8 0 0 0 26.82,31 L25.85,31 A0.8,0.8 0 0 0 24.25,31 L23.28,31 A0.8,0.8 0 0 0 21.68,31 L20.72,31 A0.8,0.8 0 0 0 19.12,31 L18.15,31 A0.8,0.8 0 0 0 16.55,31 L15.58,31 A0.8,0.8 0 0 0 13.98,31 L13.02,31 A0.8,0.8 0 0 0 11.42,31 L10.45,31 A0.8,0.8 0 0 0 8.85,31 L7.88,31 A0.8,0.8 0 0 0 6.28,31 L5.8,31 L5.8,30.52 A0.8,0.8 0 0 0 5.8,28.92 L5.8,27.96 A0.8,0.8 0 0 0 5.8,26.36 L5.8,25.39 A0.8,0.8 0 0 0 5.8,23.79 L5.8,22.83 A0.8,0.8 0 0 0 5.8,21.23 L5.8,20.27 A0.8,0.8 0 0 0 5.8,18.67 L5.8,17.71 A0.8,0.8 0 0 0 5.8,16.11 L5.8,15.14 A0.8,0.8 0 0 0 5.8,13.54 L5.8,12.58 A0.8,0.8 0 0 0 5.8,10.98 Z"/></g><rect x="46.5" y="424.5" width="41" height="41" rx="1.2" fill="#fff" stroke="#bcbcbc" stroke-width="1"/><g transform="translate(46,424)" fill="#053f84"><rect x="5.7" y="13.1" width="30.900000000000002" height="15.200000000000001" rx="0"/></g><rect x="90.5" y="424.5" width="41" height="41" rx="1.2" fill="#fff" stroke="#bcbcbc" stroke-width="1"/><g transform="translate(90,424)" fill="#053f84"><rect x="5.7" y="13.1" width="30.900000000000002" height="15.200000000000001" rx="3.5"/></g><rect x="134.5" y="424.5" width="41" height="41" rx="1.2" fill="#fff" stroke="#bcbcbc" stroke-width="1"/><g transform="translate(134,424)" fill="#053f84"><rect x="5.7" y="13.1" width="30.900000000000002" height="15.200000000000001" rx="6.5"/></g><rect x="178.5" y="424.5" width="41" height="41" rx="1.2" fill="#fff" stroke="#bcbcbc" stroke-width="1"/><g transform="translate(178,424)" fill="#053f84"><rect x="5.7" y="11.9" width="30.900000000000002" height="18.0" rx="9"/></g><rect x="2.5" y="468.5" width="41" height="41" rx="1.2" fill="#fff" stroke="#bcbcbc" stroke-width="1"/><g transform="translate(2,468)" fill="#053f84"><rect x="5.4" y="14.5" width="31.200000000000003" height="12.3" rx="6.1"/></g><rect x="46.5" y="468.5" width="41" height="41" rx="1.2" fill="#fff" stroke="#bcbcbc" stroke-width="1"/><g transform="translate(46,468)" fill="#053f84"><polygon points="6.30,26.80 24.80,26.80 36.40,14.50 23.70,14.50"/></g><rect x="90.5" y="468.5" width="41" height="41" rx="1.2" fill="#fff" stroke="#bcbcbc" stroke-width="1"/><g transform="translate(90,468)" fill="#053f84"><polygon points="6.00,29.80 26.90,29.80 36.10,11.30 17.70,11.30"/></g><rect x="134.5" y="468.5" width="41" height="41" rx="1.2" fill="#fff" stroke="#bcbcbc" stroke-width="1"/><g transform="translate(134,468)" fill="#053f84"><polygon points="6.00,24.70 36.60,24.70 28.00,16.40 10.60,16.40"/></g><rect x="178.5" y="468.5" width="41" height="41" rx="1.2" fill="#fff" stroke="#bcbcbc" stroke-width="1"/><g transform="translate(178,468)" fill="#053f84"><polygon points="6.00,28.40 36.70,28.40 28.10,12.70 10.70,12.70"/></g><rect x="2.5" y="512.5" width="41" height="41" rx="1.2" fill="#fff" stroke="#bcbcbc" stroke-width="1"/><g transform="translate(2,512)" fill="#053f84"><polygon points="21.00,5.70 30.20,14.60 21.00,36.10 11.90,14.60"/></g><rect x="46.5" y="512.5" width="41" height="41" rx="1.2" fill="#fff" stroke="#bcbcbc" stroke-width="1"/><g transform="translate(46,512)" fill="#053f84"><polygon points="5.70,16.60 20.70,10.00 36.40,16.60 20.70,31.60"/></g><rect x="90.5" y="512.5" width="41" height="41" rx="1.2" fill="#fff" stroke="#bcbcbc" stroke-width="1"/><g transform="translate(90,512)" fill="#053f84"><polygon points="21.20,7.80 36.10,34.00 6.00,34.00"/></g><rect x="134.5" y="512.5" width="41" height="41" rx="1.2" fill="#fff" stroke="#bcbcbc" stroke-width="1"/><g transform="translate(134,512)" fill="#053f84"><path d="M18.80,8.52 Q21.00,4.60 23.22,8.51 L36.38,31.69 Q38.60,35.60 34.10,35.60 L8.10,35.60 Q3.60,35.60 5.80,31.68 Z"/></g><rect x="178.5" y="512.5" width="41" height="41" rx="1.2" fill="#fff" stroke="#bcbcbc" stroke-width="1"/><g transform="translate(178,512)" fill="#053f84"><path d="M17.06,9.56 Q21.00,2.60 24.94,9.56 L36.06,29.24 Q40.00,36.20 32.00,36.20 L10.00,36.20 Q2.00,36.20 5.94,29.24 Z"/></g><rect x="2.5" y="556.5" width="41" height="41" rx="1.2" fill="#fff" stroke="#bcbcbc" stroke-width="1"/><g transform="translate(2,556)" fill="#053f84"><path d="M21,6.7 Q34.6,17.1 36.6,33.5 Q21,37.0 5.8,33.5 Q7.8,17.1 21,6.7Z"/></g><rect x="46.5" y="556.5" width="41" height="41" rx="1.2" fill="#fff" stroke="#bcbcbc" stroke-width="1"/><g transform="translate(46,556)" fill="#053f84"><polygon points="6.30,35.40 37.00,35.40 37.00,5.20"/></g><rect x="90.5" y="556.5" width="41" height="41" rx="1.2" fill="#fff" stroke="#bcbcbc" stroke-width="1"/><g transform="translate(90,556)" fill="#053f84"><polygon points="21.20,5.20 32.60,35.40 9.90,35.40"/></g><rect x="134.5" y="556.5" width="41" height="41" rx="1.2" fill="#fff" stroke="#bcbcbc" stroke-width="1"/><g transform="translate(134,556)" fill="#053f84"><polygon points="6.00,29.80 36.80,29.80 36.80,11.40"/></g><rect x="178.5" y="556.5" width="41" height="41" rx="1.2" fill="#fff" stroke="#bcbcbc" stroke-width="1"/><g transform="translate(178,556)" fill="#053f84"><polygon points="20.90,6.30 36.70,16.90 31.20,35.60 10.70,35.60 6.00,16.90"/></g><rect x="2.5" y="600.5" width="41" height="41" rx="1.2" fill="#fff" stroke="#bcbcbc" stroke-width="1"/><g transform="translate(2,600)" fill="#053f84"><polygon points="5.40,5.30 36.60,5.30 36.60,20.70 21.00,35.70 5.40,20.70"/></g><rect x="46.5" y="600.5" width="41" height="41" rx="1.2" fill="#fff" stroke="#bcbcbc" stroke-width="1"/><g transform="translate(46,600)" fill="#053f84"><polygon points="5.70,20.70 13.50,7.40 28.90,7.40 36.60,20.70 28.90,34.00 13.50,34.00"/></g><rect x="90.5" y="600.5" width="41" height="41" rx="1.2" fill="#fff" stroke="#bcbcbc" stroke-width="1"/><g transform="translate(90,600)" fill="#053f84"><polygon points="6.00,20.70 13.60,13.10 29.00,13.10 36.50,20.70 29.00,28.50 13.60,28.50"/></g><rect x="134.5" y="600.5" width="41" height="41" rx="1.2" fill="#fff" stroke="#bcbcbc" stroke-width="1"/><g transform="translate(134,600)" fill="#053f84"><polygon points="15.00,4.90 27.80,4.90 36.80,13.90 36.80,27.00 27.80,36.00 15.00,36.00 6.00,27.00 6.00,13.90"/></g><rect x="178.5" y="600.5" width="41" height="41" rx="1.2" fill="#fff" stroke="#bcbcbc" stroke-width="1"/><g transform="translate(178,600)" fill="#053f84"><circle cx="20.9" cy="20.7" r="15.5"/></g><rect x="2.5" y="644.5" width="41" height="41" rx="1.2" fill="#fff" stroke="#bcbcbc" stroke-width="1"/><g transform="translate(2,644)" fill="#053f84"><polygon points="21.00,4.90 24.05,9.10 28.80,6.99 29.34,12.16 34.51,12.70 32.40,17.45 36.60,20.50 32.40,23.55 34.51,28.30 29.34,28.84 28.80,34.01 24.05,31.90 21.00,36.10 17.95,31.90 13.20,34.01 12.66,28.84 7.49,28.30 9.60,23.55 5.40,20.50 9.60,17.45 7.49,12.70 12.66,12.16 13.20,6.99 17.95,9.10"/></g><rect x="46.5" y="644.5" width="41" height="41" rx="1.2" fill="#fff" stroke="#bcbcbc" stroke-width="1"/><g transform="translate(46,644)" fill="#053f84"><polygon points="21.00,5.70 22.91,8.85 25.70,6.44 26.54,10.03 29.93,8.60 29.63,12.27 33.30,11.97 31.87,15.36 35.46,16.20 33.05,18.99 36.20,20.90 33.05,22.81 35.46,25.60 31.87,26.44 33.30,29.83 29.63,29.53 29.93,33.20 26.54,31.77 25.70,35.36 22.91,32.95 21.00,36.10 19.09,32.95 16.30,35.36 15.46,31.77 12.07,33.20 12.37,29.53 8.70,29.83 10.13,26.44 6.54,25.60 8.95,22.81 5.80,20.90 8.95,18.99 6.54,16.20 10.13,15.36 8.70,11.97 12.37,12.27 12.07,8.60 15.46,10.03 16.30,6.44 19.09,8.85"/></g><rect x="90.5" y="644.5" width="41" height="41" rx="1.2" fill="#fff" stroke="#bcbcbc" stroke-width="1"/><g transform="translate(90,644)" fill="#053f84"><path d="M21.20,7.00 A4.2,4.2 0 0 1 28.15,8.86 L28.15,8.86 A4.2,4.2 0 0 1 33.24,13.95 L33.24,13.95 A4.2,4.2 0 0 1 35.10,20.90 L35.10,20.90 A4.2,4.2 0 0 1 33.24,27.85 L33.24,27.85 A4.2,4.2 0 0 1 28.15,32.94 L28.15,32.94 A4.2,4.2 0 0 1 21.20,34.80 L21.20,34.80 A4.2,4.2 0 0 1 14.25,32.94 L14.25,32.94 A4.2,4.2 0 0 1 9.16,27.85 L9.16,27.85 A4.2,4.2 0 0 1 7.30,20.90 L7.30,20.90 A4.2,4.2 0 0 1 9.16,13.95 L9.16,13.95 A4.2,4.2 0 0 1 14.25,8.86 L14.25,8.86 A4.2,4.2 0 0 1 21.20,7.00 Z"/></g><rect x="134.5" y="644.5" width="41" height="41" rx="1.2" fill="#fff" stroke="#bcbcbc" stroke-width="1"/><g transform="translate(134,644)" fill="#053f84"><path d="M21.20,6.80 A3,3 0 0 1 26.02,7.65 L26.02,7.65 A3,3 0 0 1 30.26,10.10 L30.26,10.10 A3,3 0 0 1 33.41,13.85 L33.41,13.85 A3,3 0 0 1 35.09,18.45 L35.09,18.45 A3,3 0 0 1 35.09,23.35 L35.09,23.35 A3,3 0 0 1 33.41,27.95 L33.41,27.95 A3,3 0 0 1 30.26,31.70 L30.26,31.70 A3,3 0 0 1 26.02,34.15 L26.02,34.15 A3,3 0 0 1 21.20,35.00 L21.20,35.00 A3,3 0 0 1 16.38,34.15 L16.38,34.15 A3,3 0 0 1 12.14,31.70 L12.14,31.70 A3,3 0 0 1 8.99,27.95 L8.99,27.95 A3,3 0 0 1 7.31,23.35 L7.31,23.35 A3,3 0 0 1 7.31,18.45 L7.31,18.45 A3,3 0 0 1 8.99,13.85 L8.99,13.85 A3,3 0 0 1 12.14,10.10 L12.14,10.10 A3,3 0 0 1 16.38,7.65 L16.38,7.65 A3,3 0 0 1 21.20,6.80 Z"/></g><rect x="178.5" y="644.5" width="41" height="41" rx="1.2" fill="#fff" stroke="#bcbcbc" stroke-width="1"/><g transform="translate(178,644)" fill="#053f84"><path d="M21.20,8.50 A3.52,3.52 0 0 1 27.90,10.47 L27.90,10.47 A3.52,3.52 0 0 1 32.48,15.75 L32.48,15.75 A3.52,3.52 0 0 1 33.47,22.66 L33.47,22.66 A3.52,3.52 0 0 1 30.57,29.02 L30.57,29.02 A3.52,3.52 0 0 1 24.69,32.80 L24.69,32.80 A3.52,3.52 0 0 1 17.71,32.80 L17.71,32.80 A3.52,3.52 0 0 1 11.83,29.02 L11.83,29.02 A3.52,3.52 0 0 1 8.93,22.66 L8.93,22.66 A3.52,3.52 0 0 1 9.92,15.75 L9.92,15.75 A3.52,3.52 0 0 1 14.50,10.47 L14.50,10.47 A3.52,3.52 0 0 1 21.20,8.50 Z"/></g><rect x="2.5" y="688.5" width="41" height="41" rx="1.2" fill="#fff" stroke="#bcbcbc" stroke-width="1"/><g transform="translate(2,688)" fill="#053f84"><path d="M21.00,6.50 A2.6,2.6 0 0 1 25.45,7.20 L25.45,7.20 A2.6,2.6 0 0 1 29.46,9.25 L29.46,9.25 A2.6,2.6 0 0 1 32.65,12.44 L32.65,12.44 A2.6,2.6 0 0 1 34.70,16.45 L34.70,16.45 A2.6,2.6 0 0 1 35.40,20.90 L35.40,20.90 A2.6,2.6 0 0 1 34.70,25.35 L34.70,25.35 A2.6,2.6 0 0 1 32.65,29.36 L32.65,29.36 A2.6,2.6 0 0 1 29.46,32.55 L29.46,32.55 A2.6,2.6 0 0 1 25.45,34.60 L25.45,34.60 A2.6,2.6 0 0 1 21.00,35.30 L21.00,35.30 A2.6,2.6 0 0 1 16.55,34.60 L16.55,34.60 A2.6,2.6 0 0 1 12.54,32.55 L12.54,32.55 A2.6,2.6 0 0 1 9.35,29.36 L9.35,29.36 A2.6,2.6 0 0 1 7.30,25.35 L7.30,25.35 A2.6,2.6 0 0 1 6.60,20.90 L6.60,20.90 A2.6,2.6 0 0 1 7.30,16.45 L7.30,16.45 A2.6,2.6 0 0 1 9.35,12.44 L9.35,12.44 A2.6,2.6 0 0 1 12.54,9.25 L12.54,9.25 A2.6,2.6 0 0 1 16.55,7.20 L16.55,7.20 A2.6,2.6 0 0 1 21.00,6.50 Z"/></g><rect x="46.5" y="688.5" width="41" height="41" rx="1.2" fill="#fff" stroke="#bcbcbc" stroke-width="1"/><g transform="translate(46,688)" fill="#053f84"><path d="M20.7,19.5 L28.50,5.99 A15.6,15.6 0 1 1 12.90,5.99 Z"/></g><rect x="90.5" y="688.5" width="41" height="41" rx="1.2" fill="#fff" stroke="#bcbcbc" stroke-width="1"/><g transform="translate(90,688)" fill="#053f84"><path d="M21.2,18.1 L32.90,7.93 A15.5,15.5 0 1 1 9.50,7.93 Z"/></g><rect x="134.5" y="688.5" width="41" height="41" rx="1.2" fill="#fff" stroke="#bcbcbc" stroke-width="1"/><g transform="translate(134,688)" fill="#053f84"><path d="M21.3,16.6 L35.46,10.30 A15.5,15.5 0 1 1 7.14,10.30 Z"/></g><rect x="178.5" y="688.5" width="41" height="41" rx="1.2" fill="#fff" stroke="#bcbcbc" stroke-width="1"/><g transform="translate(178,688)" fill="#053f84"><path d="M5.6,28.9 A15.6,15.6 0 0 1 36.8,28.9 Z"/></g></svg>
<div class="a" style="left:260px;top:112px;width:78px;height:618px;background:#f5f5ec;border-left:1px solid #a9a9b0;border-top:1px solid #a9a9b0;border-right:1px solid #d8d8d0"></div>
<div class="a" style="left:338px;top:112px;width:759px;height:1px;background:#a9a9b0"></div>
<div class="a" style="left:259px;top:448px;width:23px;height:55px;background:#fff;box-shadow:1px 1px 3px rgba(0,0,0,0.28)"></div>
<svg class="a" style="left:259px;top:448px" width="23" height="55"><path d="M16.5 15.5 L6 27.5 L16.5 39.5" fill="none" stroke="#2c2c50" stroke-width="1.8"/></svg>
<svg class="a" style="left:0;top:0" width="1097" height="730"><rect x="356" y="120" width="741" height="79" fill="#c9c9c9"/><rect x="356" y="209" width="741" height="28" fill="#c9c9c9"/><rect x="356" y="262" width="741" height="3" fill="#c9c9c9"/><rect x="356" y="209" width="29" height="521" fill="#c9c9c9"/><rect x="410" y="209" width="3" height="521" fill="#c9c9c9"/><rect x="412.15" y="230.2" width="1.9" height="6.8" fill="#fff"/><rect x="423.73" y="232.2" width="1.3" height="4.8" fill="#fff"/><rect x="435.02" y="232.2" width="1.3" height="4.8" fill="#fff"/><rect x="446.30" y="232.2" width="1.3" height="4.8" fill="#fff"/><rect x="457.29" y="230.2" width="1.9" height="6.8" fill="#fff"/><rect x="468.87" y="232.2" width="1.3" height="4.8" fill="#fff"/><rect x="480.15" y="232.2" width="1.3" height="4.8" fill="#fff"/><rect x="491.44" y="232.2" width="1.3" height="4.8" fill="#fff"/><rect x="502.42" y="230.2" width="1.9" height="6.8" fill="#fff"/><rect x="514.00" y="232.2" width="1.3" height="4.8" fill="#fff"/><rect x="525.29" y="232.2" width="1.3" height="4.8" fill="#fff"/><rect x="536.57" y="232.2" width="1.3" height="4.8" fill="#fff"/><rect x="547.55" y="230.2" width="1.9" height="6.8" fill="#fff"/><rect x="559.14" y="232.2" width="1.3" height="4.8" fill="#fff"/><rect x="570.42" y="232.2" width="1.3" height="4.8" fill="#fff"/><rect x="581.71" y="232.2" width="1.3" height="4.8" fill="#fff"/><rect x="592.69" y="230.2" width="1.9" height="6.8" fill="#fff"/><rect x="604.27" y="232.2" width="1.3" height="4.8" fill="#fff"/><rect x="615.56" y="232.2" width="1.3" height="4.8" fill="#fff"/><rect x="626.84" y="232.2" width="1.3" height="4.8" fill="#fff"/><rect x="637.82" y="230.2" width="1.9" height="6.8" fill="#fff"/><rect x="649.41" y="232.2" width="1.3" height="4.8" fill="#fff"/><rect x="660.69" y="232.2" width="1.3" height="4.8" fill="#fff"/><rect x="671.98" y="232.2" width="1.3" height="4.8" fill="#fff"/><rect x="682.96" y="230.2" width="1.9" height="6.8" fill="#fff"/><rect x="694.54" y="232.2" width="1.3" height="4.8" fill="#fff"/><rect x="705.83" y="232.2" width="1.3" height="4.8" fill="#fff"/><rect x="717.11" y="232.2" width="1.3" height="4.8" fill="#fff"/><rect x="728.10" y="230.2" width="1.9" height="6.8" fill="#fff"/><rect x="739.68" y="232.2" width="1.3" height="4.8" fill="#fff"/><rect x="750.96" y="232.2" width="1.3" height="4.8" fill="#fff"/><rect x="762.25" y="232.2" width="1.3" height="4.8" fill="#fff"/><rect x="773.23" y="230.2" width="1.9" height="6.8" fill="#fff"/><rect x="784.81" y="232.2" width="1.3" height="4.8" fill="#fff"/><rect x="796.10" y="232.2" width="1.3" height="4.8" fill="#fff"/><rect x="807.38" y="232.2" width="1.3" height="4.8" fill="#fff"/><rect x="818.37" y="230.2" width="1.9" height="6.8" fill="#fff"/><rect x="829.95" y="232.2" width="1.3" height="4.8" fill="#fff"/><rect x="841.23" y="232.2" width="1.3" height="4.8" fill="#fff"/><rect x="852.52" y="232.2" width="1.3" height="4.8" fill="#fff"/><rect x="863.50" y="230.2" width="1.9" height="6.8" fill="#fff"/><rect x="875.08" y="232.2" width="1.3" height="4.8" fill="#fff"/><rect x="886.37" y="232.2" width="1.3" height="4.8" fill="#fff"/><rect x="897.65" y="232.2" width="1.3" height="4.8" fill="#fff"/><rect x="908.63" y="230.2" width="1.9" height="6.8" fill="#fff"/><rect x="920.22" y="232.2" width="1.3" height="4.8" fill="#fff"/><rect x="931.50" y="232.2" width="1.3" height="4.8" fill="#fff"/><rect x="942.79" y="232.2" width="1.3" height="4.8" fill="#fff"/><rect x="953.77" y="230.2" width="1.9" height="6.8" fill="#fff"/><rect x="965.35" y="232.2" width="1.3" height="4.8" fill="#fff"/><rect x="976.64" y="232.2" width="1.3" height="4.8" fill="#fff"/><rect x="987.92" y="232.2" width="1.3" height="4.8" fill="#fff"/><rect x="998.90" y="230.2" width="1.9" height="6.8" fill="#fff"/><rect x="1010.49" y="232.2" width="1.3" height="4.8" fill="#fff"/><rect x="1021.77" y="232.2" width="1.3" height="4.8" fill="#fff"/><rect x="1033.06" y="232.2" width="1.3" height="4.8" fill="#fff"/><rect x="1044.04" y="230.2" width="1.9" height="6.8" fill="#fff"/><rect x="1055.62" y="232.2" width="1.3" height="4.8" fill="#fff"/><rect x="1066.91" y="232.2" width="1.3" height="4.8" fill="#fff"/><rect x="1078.19" y="232.2" width="1.3" height="4.8" fill="#fff"/><rect x="1089.17" y="230.2" width="1.9" height="6.8" fill="#fff"/><text x="503.37" y="226.2" font-size="17" fill="#fff" stroke="#fff" stroke-width="0.45" text-anchor="middle" font-family="Liberation Sans">1</text><text x="593.64" y="226.2" font-size="17" fill="#fff" stroke="#fff" stroke-width="0.45" text-anchor="middle" font-family="Liberation Sans">2</text><text x="683.91" y="226.2" font-size="17" fill="#fff" stroke="#fff" stroke-width="0.45" text-anchor="middle" font-family="Liberation Sans">3</text><text x="774.18" y="226.2" font-size="17" fill="#fff" stroke="#fff" stroke-width="0.45" text-anchor="middle" font-family="Liberation Sans">4</text><text x="864.45" y="226.2" font-size="17" fill="#fff" stroke="#fff" stroke-width="0.45" text-anchor="middle" font-family="Liberation Sans">5</text><text x="954.72" y="226.2" font-size="17" fill="#fff" stroke="#fff" stroke-width="0.45" text-anchor="middle" font-family="Liberation Sans">6</text><text x="1044.99" y="226.2" font-size="17" fill="#fff" stroke="#fff" stroke-width="0.45" text-anchor="middle" font-family="Liberation Sans">7</text><text x="1135.26" y="226.2" font-size="17" fill="#fff" stroke="#fff" stroke-width="0.45" text-anchor="middle" font-family="Liberation Sans">8</text><rect x="412.60" y="255" width="1" height="7" fill="#bdbdbd"/><rect x="430.37" y="258.3" width="1" height="3.7" fill="#bdbdbd"/><rect x="448.14" y="255" width="1" height="7" fill="#bdbdbd"/><text x="448.64" y="250.6" font-size="10" fill="#bababa" text-anchor="middle" font-family="Liberation Sans">10</text><rect x="465.91" y="258.3" width="1" height="3.7" fill="#bdbdbd"/><rect x="483.68" y="255" width="1" height="7" fill="#bdbdbd"/><text x="484.18" y="250.6" font-size="10" fill="#bababa" text-anchor="middle" font-family="Liberation Sans">20</text><rect x="501.45" y="258.3" width="1" height="3.7" fill="#bdbdbd"/><rect x="519.22" y="255" width="1" height="7" fill="#bdbdbd"/><text x="519.72" y="250.6" font-size="10" fill="#bababa" text-anchor="middle" font-family="Liberation Sans">30</text><rect x="536.99" y="258.3" width="1" height="3.7" fill="#bdbdbd"/><rect x="554.76" y="255" width="1" height="7" fill="#bdbdbd"/><text x="555.26" y="250.6" font-size="10" fill="#bababa" text-anchor="middle" font-family="Liberation Sans">40</text><rect x="572.53" y="258.3" width="1" height="3.7" fill="#bdbdbd"/><rect x="590.30" y="255" width="1" height="7" fill="#bdbdbd"/><text x="590.80" y="250.6" font-size="10" fill="#bababa" text-anchor="middle" font-family="Liberation Sans">50</text><rect x="608.07" y="258.3" width="1" height="3.7" fill="#bdbdbd"/><rect x="625.84" y="255" width="1" height="7" fill="#bdbdbd"/><text x="626.34" y="250.6" font-size="10" fill="#bababa" text-anchor="middle" font-family="Liberation Sans">60</text><rect x="643.61" y="258.3" width="1" height="3.7" fill="#bdbdbd"/><rect x="661.38" y="255" width="1" height="7" fill="#bdbdbd"/><text x="661.88" y="250.6" font-size="10" fill="#bababa" text-anchor="middle" font-family="Liberation Sans">70</text><rect x="679.15" y="258.3" width="1" height="3.7" fill="#bdbdbd"/><rect x="696.91" y="255" width="1" height="7" fill="#bdbdbd"/><text x="697.41" y="250.6" font-size="10" fill="#bababa" text-anchor="middle" font-family="Liberation Sans">80</text><rect x="714.68" y="258.3" width="1" height="3.7" fill="#bdbdbd"/><rect x="732.45" y="255" width="1" height="7" fill="#bdbdbd"/><text x="732.95" y="250.6" font-size="10" fill="#bababa" text-anchor="middle" font-family="Liberation Sans">90</text><rect x="750.22" y="258.3" width="1" height="3.7" fill="#bdbdbd"/><rect x="767.99" y="255" width="1" height="7" fill="#bdbdbd"/><text x="768.49" y="250.6" font-size="10" fill="#bababa" text-anchor="middle" font-family="Liberation Sans">100</text><rect x="785.76" y="258.3" width="1" height="3.7" fill="#bdbdbd"/><rect x="803.53" y="255" width="1" height="7" fill="#bdbdbd"/><text x="804.03" y="250.6" font-size="10" fill="#bababa" text-anchor="middle" font-family="Liberation Sans">110</text><rect x="821.30" y="258.3" width="1" height="3.7" fill="#bdbdbd"/><rect x="839.07" y="255" width="1" height="7" fill="#bdbdbd"/><text x="839.57" y="250.6" font-size="10" fill="#bababa" text-anchor="middle" font-family="Liberation Sans">120</text><rect x="856.84" y="258.3" width="1" height="3.7" fill="#bdbdbd"/><rect x="874.61" y="255" width="1" height="7" fill="#bdbdbd"/><text x="875.11" y="250.6" font-size="10" fill="#bababa" text-anchor="middle" font-family="Liberation Sans">130</text><rect x="892.38" y="258.3" width="1" height="3.7" fill="#bdbdbd"/><rect x="910.15" y="255" width="1" height="7" fill="#bdbdbd"/><text x="910.65" y="250.6" font-size="10" fill="#bababa" text-anchor="middle" font-family="Liberation Sans">140</text><rect x="927.92" y="258.3" width="1" height="3.7" fill="#bdbdbd"/><rect x="945.69" y="255" width="1" height="7" fill="#bdbdbd"/><text x="946.19" y="250.6" font-size="10" fill="#bababa" text-anchor="middle" font-family="Liberation Sans">150</text><rect x="963.46" y="258.3" width="1" height="3.7" fill="#bdbdbd"/><rect x="981.23" y="255" width="1" height="7" fill="#bdbdbd"/><text x="981.73" y="250.6" font-size="10" fill="#bababa" text-anchor="middle" font-family="Liberation Sans">160</text><rect x="999.00" y="258.3" width="1" height="3.7" fill="#bdbdbd"/><rect x="1016.77" y="255" width="1" height="7" fill="#bdbdbd"/><text x="1017.27" y="250.6" font-size="10" fill="#bababa" text-anchor="middle" font-family="Liberation Sans">170</text><rect x="1034.54" y="258.3" width="1" height="3.7" fill="#bdbdbd"/><rect x="1052.31" y="255" width="1" height="7" fill="#bdbdbd"/><text x="1052.81" y="250.6" font-size="10" fill="#bababa" text-anchor="middle" font-family="Liberation Sans">180</text><rect x="1070.08" y="258.3" width="1" height="3.7" fill="#bdbdbd"/><rect x="1087.85" y="255" width="1" height="7" fill="#bdbdbd"/><text x="1088.35" y="250.6" font-size="10" fill="#bababa" text-anchor="middle" font-family="Liberation Sans">190</text><rect x="378.4" y="264.35" width="6.6" height="1.9" fill="#fff"/><rect x="380.2" y="275.93" width="4.8" height="1.3" fill="#fff"/><rect x="380.2" y="287.22" width="4.8" height="1.3" fill="#fff"/><rect x="380.2" y="298.50" width="4.8" height="1.3" fill="#fff"/><rect x="378.4" y="309.49" width="6.6" height="1.9" fill="#fff"/><rect x="380.2" y="321.07" width="4.8" height="1.3" fill="#fff"/><rect x="380.2" y="332.35" width="4.8" height="1.3" fill="#fff"/><rect x="380.2" y="343.64" width="4.8" height="1.3" fill="#fff"/><rect x="378.4" y="354.62" width="6.6" height="1.9" fill="#fff"/><rect x="380.2" y="366.20" width="4.8" height="1.3" fill="#fff"/><rect x="380.2" y="377.49" width="4.8" height="1.3" fill="#fff"/><rect x="380.2" y="388.77" width="4.8" height="1.3" fill="#fff"/><rect x="378.4" y="399.76" width="6.6" height="1.9" fill="#fff"/><rect x="380.2" y="411.34" width="4.8" height="1.3" fill="#fff"/><rect x="380.2" y="422.62" width="4.8" height="1.3" fill="#fff"/><rect x="380.2" y="433.91" width="4.8" height="1.3" fill="#fff"/><rect x="378.4" y="444.89" width="6.6" height="1.9" fill="#fff"/><rect x="380.2" y="456.47" width="4.8" height="1.3" fill="#fff"/><rect x="380.2" y="467.76" width="4.8" height="1.3" fill="#fff"/><rect x="380.2" y="479.04" width="4.8" height="1.3" fill="#fff"/><rect x="378.4" y="490.03" width="6.6" height="1.9" fill="#fff"/><rect x="380.2" y="501.61" width="4.8" height="1.3" fill="#fff"/><rect x="380.2" y="512.89" width="4.8" height="1.3" fill="#fff"/><rect x="380.2" y="524.18" width="4.8" height="1.3" fill="#fff"/><rect x="378.4" y="535.16" width="6.6" height="1.9" fill="#fff"/><rect x="380.2" y="546.74" width="4.8" height="1.3" fill="#fff"/><rect x="380.2" y="558.03" width="4.8" height="1.3" fill="#fff"/><rect x="380.2" y="569.31" width="4.8" height="1.3" fill="#fff"/><rect x="378.4" y="580.29" width="6.6" height="1.9" fill="#fff"/><rect x="380.2" y="591.88" width="4.8" height="1.3" fill="#fff"/><rect x="380.2" y="603.16" width="4.8" height="1.3" fill="#fff"/><rect x="380.2" y="614.45" width="4.8" height="1.3" fill="#fff"/><rect x="378.4" y="625.43" width="6.6" height="1.9" fill="#fff"/><rect x="380.2" y="637.01" width="4.8" height="1.3" fill="#fff"/><rect x="380.2" y="648.30" width="4.8" height="1.3" fill="#fff"/><rect x="380.2" y="659.58" width="4.8" height="1.3" fill="#fff"/><rect x="378.4" y="670.56" width="6.6" height="1.9" fill="#fff"/><rect x="380.2" y="682.15" width="4.8" height="1.3" fill="#fff"/><rect x="380.2" y="693.43" width="4.8" height="1.3" fill="#fff"/><rect x="380.2" y="704.72" width="4.8" height="1.3" fill="#fff"/><rect x="378.4" y="715.70" width="6.6" height="1.9" fill="#fff"/><rect x="380.2" y="727.28" width="4.8" height="1.3" fill="#fff"/><text x="374.2" y="355.57" font-size="17" fill="#fff" stroke="#fff" stroke-width="0.45" text-anchor="middle" font-family="Liberation Sans" transform="rotate(-90 374.2 355.57) translate(0 0)">1</text><text x="374.2" y="445.84" font-size="17" fill="#fff" stroke="#fff" stroke-width="0.45" text-anchor="middle" font-family="Liberation Sans" transform="rotate(-90 374.2 445.84) translate(0 0)">2</text><text x="374.2" y="536.11" font-size="17" fill="#fff" stroke="#fff" stroke-width="0.45" text-anchor="middle" font-family="Liberation Sans" transform="rotate(-90 374.2 536.11) translate(0 0)">3</text><text x="374.2" y="626.38" font-size="17" fill="#fff" stroke="#fff" stroke-width="0.45" text-anchor="middle" font-family="Liberation Sans" transform="rotate(-90 374.2 626.38) translate(0 0)">4</text><text x="374.2" y="716.65" font-size="17" fill="#fff" stroke="#fff" stroke-width="0.45" text-anchor="middle" font-family="Liberation Sans" transform="rotate(-90 374.2 716.65) translate(0 0)">5</text><rect x="403" y="264.80" width="7" height="1" fill="#bdbdbd"/><rect x="406.3" y="282.57" width="3.7" height="1" fill="#bdbdbd"/><rect x="403" y="300.34" width="7" height="1" fill="#bdbdbd"/><text x="398.3" y="300.84" font-size="10" fill="#bababa" text-anchor="middle" font-family="Liberation Sans" transform="rotate(-90 398.3 300.84)">10</text><rect x="406.3" y="318.11" width="3.7" height="1" fill="#bdbdbd"/><rect x="403" y="335.88" width="7" height="1" fill="#bdbdbd"/><text x="398.3" y="336.38" font-size="10" fill="#bababa" text-anchor="middle" font-family="Liberation Sans" transform="rotate(-90 398.3 336.38)">20</text><rect x="406.3" y="353.65" width="3.7" height="1" fill="#bdbdbd"/><rect x="403" y="371.42" width="7" height="1" fill="#bdbdbd"/><text x="398.3" y="371.92" font-size="10" fill="#bababa" text-anchor="middle" font-family="Liberation Sans" transform="rotate(-90 398.3 371.92)">30</text><rect x="406.3" y="389.19" width="3.7" height="1" fill="#bdbdbd"/><rect x="403" y="406.96" width="7" height="1" fill="#bdbdbd"/><text x="398.3" y="407.46" font-size="10" fill="#bababa" text-anchor="middle" font-family="Liberation Sans" transform="rotate(-90 398.3 407.46)">40</text><rect x="406.3" y="424.73" width="3.7" height="1" fill="#bdbdbd"/><rect x="403" y="442.50" width="7" height="1" fill="#bdbdbd"/><text x="398.3" y="443.00" font-size="10" fill="#bababa" text-anchor="middle" font-family="Liberation Sans" transform="rotate(-90 398.3 443.00)">50</text><rect x="406.3" y="460.27" width="3.7" height="1" fill="#bdbdbd"/><rect x="403" y="478.04" width="7" height="1" fill="#bdbdbd"/><text x="398.3" y="478.54" font-size="10" fill="#bababa" text-anchor="middle" font-family="Liberation Sans" transform="rotate(-90 398.3 478.54)">60</text><rect x="406.3" y="495.81" width="3.7" height="1" fill="#bdbdbd"/><rect x="403" y="513.58" width="7" height="1" fill="#bdbdbd"/><text x="398.3" y="514.08" font-size="10" fill="#bababa" text-anchor="middle" font-family="Liberation Sans" transform="rotate(-90 398.3 514.08)">70</text><rect x="406.3" y="531.35" width="3.7" height="1" fill="#bdbdbd"/><rect x="403" y="549.11" width="7" height="1" fill="#bdbdbd"/><text x="398.3" y="549.61" font-size="10" fill="#bababa" text-anchor="middle" font-family="Liberation Sans" transform="rotate(-90 398.3 549.61)">80</text><rect x="406.3" y="566.88" width="3.7" height="1" fill="#bdbdbd"/><rect x="403" y="584.65" width="7" height="1" fill="#bdbdbd"/><text x="398.3" y="585.15" font-size="10" fill="#bababa" text-anchor="middle" font-family="Liberation Sans" transform="rotate(-90 398.3 585.15)">90</text><rect x="406.3" y="602.42" width="3.7" height="1" fill="#bdbdbd"/><rect x="403" y="620.19" width="7" height="1" fill="#bdbdbd"/><text x="398.3" y="620.69" font-size="10" fill="#bababa" text-anchor="middle" font-family="Liberation Sans" transform="rotate(-90 398.3 620.69)">100</text><rect x="406.3" y="637.96" width="3.7" height="1" fill="#bdbdbd"/><rect x="403" y="655.73" width="7" height="1" fill="#bdbdbd"/><text x="398.3" y="656.23" font-size="10" fill="#bababa" text-anchor="middle" font-family="Liberation Sans" transform="rotate(-90 398.3 656.23)">110</text><rect x="406.3" y="673.50" width="3.7" height="1" fill="#bdbdbd"/><rect x="403" y="691.27" width="7" height="1" fill="#bdbdbd"/><text x="398.3" y="691.77" font-size="10" fill="#bababa" text-anchor="middle" font-family="Liberation Sans" transform="rotate(-90 398.3 691.77)">120</text><rect x="406.3" y="709.04" width="3.7" height="1" fill="#bdbdbd"/><rect x="403" y="726.81" width="7" height="1" fill="#bdbdbd"/><text x="398.3" y="727.31" font-size="10" fill="#bababa" text-anchor="middle" font-family="Liberation Sans" transform="rotate(-90 398.3 727.31)">130</text><rect x="502.42" y="271.87" width="1.9" height="1.9" fill="#c6c6c6"/><rect x="502.42" y="286.92" width="1.9" height="1.9" fill="#c6c6c6"/><rect x="502.42" y="301.96" width="1.9" height="1.9" fill="#c6c6c6"/><rect x="502.42" y="317.01" width="1.9" height="1.9" fill="#c6c6c6"/><rect x="502.42" y="332.05" width="1.9" height="1.9" fill="#c6c6c6"/><rect x="502.42" y="347.10" width="1.9" height="1.9" fill="#c6c6c6"/><rect x="502.42" y="362.14" width="1.9" height="1.9" fill="#c6c6c6"/><rect x="502.42" y="377.19" width="1.9" height="1.9" fill="#c6c6c6"/><rect x="502.42" y="392.23" width="1.9" height="1.9" fill="#c6c6c6"/><rect x="502.42" y="407.28" width="1.9" height="1.9" fill="#c6c6c6"/><rect x="502.42" y="422.32" width="1.9" height="1.9" fill="#c6c6c6"/><rect x="502.42" y="437.37" width="1.9" height="1.9" fill="#c6c6c6"/><rect x="502.42" y="452.41" width="1.9" height="1.9" fill="#c6c6c6"/><rect x="502.42" y="467.46" width="1.9" height="1.9" fill="#c6c6c6"/><rect x="502.42" y="482.50" width="1.9" height="1.9" fill="#c6c6c6"/><rect x="502.42" y="497.55" width="1.9" height="1.9" fill="#c6c6c6"/><rect x="502.42" y="512.59" width="1.9" height="1.9" fill="#c6c6c6"/><rect x="502.42" y="527.64" width="1.9" height="1.9" fill="#c6c6c6"/><rect x="502.42" y="542.68" width="1.9" height="1.9" fill="#c6c6c6"/><rect x="502.42" y="557.73" width="1.9" height="1.9" fill="#c6c6c6"/><rect x="502.42" y="572.77" width="1.9" height="1.9" fill="#c6c6c6"/><rect x="502.42" y="587.82" width="1.9" height="1.9" fill="#c6c6c6"/><rect x="502.42" y="602.86" width="1.9" height="1.9" fill="#c6c6c6"/><rect x="502.42" y="617.91" width="1.9" height="1.9" fill="#c6c6c6"/><rect x="502.42" y="632.95" width="1.9" height="1.9" fill="#c6c6c6"/><rect x="502.42" y="648.00" width="1.9" height="1.9" fill="#c6c6c6"/><rect x="502.42" y="663.04" width="1.9" height="1.9" fill="#c6c6c6"/><rect x="502.42" y="678.09" width="1.9" height="1.9" fill="#c6c6c6"/><rect x="502.42" y="693.13" width="1.9" height="1.9" fill="#c6c6c6"/><rect x="502.42" y="708.18" width="1.9" height="1.9" fill="#c6c6c6"/><rect x="502.42" y="723.22" width="1.9" height="1.9" fill="#c6c6c6"/><rect x="592.69" y="271.87" width="1.9" height="1.9" fill="#c6c6c6"/><rect x="592.69" y="286.92" width="1.9" height="1.9" fill="#c6c6c6"/><rect x="592.69" y="301.96" width="1.9" height="1.9" fill="#c6c6c6"/><rect x="592.69" y="317.01" width="1.9" height="1.9" fill="#c6c6c6"/><rect x="592.69" y="332.05" width="1.9" height="1.9" fill="#c6c6c6"/><rect x="592.69" y="347.10" width="1.9" height="1.9" fill="#c6c6c6"/><rect x="592.69" y="362.14" width="1.9" height="1.9" fill="#c6c6c6"/><rect x="592.69" y="377.19" width="1.9" height="1.9" fill="#c6c6c6"/><rect x="592.69" y="392.23" width="1.9" height="1.9" fill="#c6c6c6"/><rect x="592.69" y="407.28" width="1.9" height="1.9" fill="#c6c6c6"/><rect x="592.69" y="422.32" width="1.9" height="1.9" fill="#c6c6c6"/><rect x="592.69" y="437.37" width="1.9" height="1.9" fill="#c6c6c6"/><rect x="592.69" y="452.41" width="1.9" height="1.9" fill="#c6c6c6"/><rect x="592.69" y="467.46" width="1.9" height="1.9" fill="#c6c6c6"/><rect x="592.69" y="482.50" width="1.9" height="1.9" fill="#c6c6c6"/><rect x="592.69" y="497.55" width="1.9" height="1.9" fill="#c6c6c6"/><rect x="592.69" y="512.59" width="1.9" height="1.9" fill="#c6c6c6"/><rect x="592.69" y="527.64" width="1.9" height="1.9" fill="#c6c6c6"/><rect x="592.69" y="542.68" width="1.9" height="1.9" fill="#c6c6c6"/><rect x="592.69" y="557.73" width="1.9" height="1.9" fill="#c6c6c6"/><rect x="592.69" y="572.77" width="1.9" height="1.9" fill="#c6c6c6"/><rect x="592.69" y="587.82" width="1.9" height="1.9" fill="#c6c6c6"/><rect x="592.69" y="602.86" width="1.9" height="1.9" fill="#c6c6c6"/><rect x="592.69" y="617.91" width="1.9" height="1.9" fill="#c6c6c6"/><rect x="592.69" y="632.95" width="1.9" height="1.9" fill="#c6c6c6"/><rect x="592.69" y="648.00" width="1.9" height="1.9" fill="#c6c6c6"/><rect x="592.69" y="663.04" width="1.9" height="1.9" fill="#c6c6c6"/><rect x="592.69" y="678.09" width="1.9" height="1.9" fill="#c6c6c6"/><rect x="592.69" y="693.13" width="1.9" height="1.9" fill="#c6c6c6"/><rect x="592.69" y="708.18" width="1.9" height="1.9" fill="#c6c6c6"/><rect x="592.69" y="723.22" width="1.9" height="1.9" fill="#c6c6c6"/><rect x="682.96" y="271.87" width="1.9" height="1.9" fill="#c6c6c6"/><rect x="682.96" y="286.92" width="1.9" height="1.9" fill="#c6c6c6"/><rect x="682.96" y="301.96" width="1.9" height="1.9" fill="#c6c6c6"/><rect x="682.96" y="317.01" width="1.9" height="1.9" fill="#c6c6c6"/><rect x="682.96" y="332.05" width="1.9" height="1.9" fill="#c6c6c6"/><rect x="682.96" y="347.10" width="1.9" height="1.9" fill="#c6c6c6"/><rect x="682.96" y="362.14" width="1.9" height="1.9" fill="#c6c6c6"/><rect x="682.96" y="377.19" width="1.9" height="1.9" fill="#c6c6c6"/><rect x="682.96" y="392.23" width="1.9" height="1.9" fill="#c6c6c6"/><rect x="682.96" y="407.28" width="1.9" height="1.9" fill="#c6c6c6"/><rect x="682.96" y="422.32" width="1.9" height="1.9" fill="#c6c6c6"/><rect x="682.96" y="437.37" width="1.9" height="1.9" fill="#c6c6c6"/><rect x="682.96" y="452.41" width="1.9" height="1.9" fill="#c6c6c6"/><rect x="682.96" y="467.46" width="1.9" height="1.9" fill="#c6c6c6"/><rect x="682.96" y="482.50" width="1.9" height="1.9" fill="#c6c6c6"/><rect x="682.96" y="497.55" width="1.9" height="1.9" fill="#c6c6c6"/><rect x="682.96" y="512.59" width="1.9" height="1.9" fill="#c6c6c6"/><rect x="682.96" y="527.64" width="1.9" height="1.9" fill="#c6c6c6"/><rect x="682.96" y="542.68" width="1.9" height="1.9" fill="#c6c6c6"/><rect x="682.96" y="557.73" width="1.9" height="1.9" fill="#c6c6c6"/><rect x="682.96" y="572.77" width="1.9" height="1.9" fill="#c6c6c6"/><rect x="682.96" y="587.82" width="1.9" height="1.9" fill="#c6c6c6"/><rect x="682.96" y="602.86" width="1.9" height="1.9" fill="#c6c6c6"/><rect x="682.96" y="617.91" width="1.9" height="1.9" fill="#c6c6c6"/><rect x="682.96" y="632.95" width="1.9" height="1.9" fill="#c6c6c6"/><rect x="682.96" y="648.00" width="1.9" height="1.9" fill="#c6c6c6"/><rect x="682.96" y="663.04" width="1.9" height="1.9" fill="#c6c6c6"/><rect x="682.96" y="678.09" width="1.9" height="1.9" fill="#c6c6c6"/><rect x="682.96" y="693.13" width="1.9" height="1.9" fill="#c6c6c6"/><rect x="682.96" y="708.18" width="1.9" height="1.9" fill="#c6c6c6"/><rect x="682.96" y="723.22" width="1.9" height="1.9" fill="#c6c6c6"/><rect x="773.23" y="271.87" width="1.9" height="1.9" fill="#c6c6c6"/><rect x="773.23" y="286.92" width="1.9" height="1.9" fill="#c6c6c6"/><rect x="773.23" y="301.96" width="1.9" height="1.9" fill="#c6c6c6"/><rect x="773.23" y="317.01" width="1.9" height="1.9" fill="#c6c6c6"/><rect x="773.23" y="332.05" width="1.9" height="1.9" fill="#c6c6c6"/><rect x="773.23" y="347.10" width="1.9" height="1.9" fill="#c6c6c6"/><rect x="773.23" y="362.14" width="1.9" height="1.9" fill="#c6c6c6"/><rect x="773.23" y="377.19" width="1.9" height="1.9" fill="#c6c6c6"/><rect x="773.23" y="392.23" width="1.9" height="1.9" fill="#c6c6c6"/><rect x="773.23" y="407.28" width="1.9" height="1.9" fill="#c6c6c6"/><rect x="773.23" y="422.32" width="1.9" height="1.9" fill="#c6c6c6"/><rect x="773.23" y="437.37" width="1.9" height="1.9" fill="#c6c6c6"/><rect x="773.23" y="452.41" width="1.9" height="1.9" fill="#c6c6c6"/><rect x="773.23" y="467.46" width="1.9" height="1.9" fill="#c6c6c6"/><rect x="773.23" y="482.50" width="1.9" height="1.9" fill="#c6c6c6"/><rect x="773.23" y="497.55" width="1.9" height="1.9" fill="#c6c6c6"/><rect x="773.23" y="512.59" width="1.9" height="1.9" fill="#c6c6c6"/><rect x="773.23" y="527.64" width="1.9" height="1.9" fill="#c6c6c6"/><rect x="773.23" y="542.68" width="1.9" height="1.9" fill="#c6c6c6"/><rect x="773.23" y="557.73" width="1.9" height="1.9" fill="#c6c6c6"/><rect x="773.23" y="572.77" width="1.9" height="1.9" fill="#c6c6c6"/><rect x="773.23" y="587.82" width="1.9" height="1.9" fill="#c6c6c6"/><rect x="773.23" y="602.86" width="1.9" height="1.9" fill="#c6c6c6"/><rect x="773.23" y="617.91" width="1.9" height="1.9" fill="#c6c6c6"/><rect x="773.23" y="632.95" width="1.9" height="1.9" fill="#c6c6c6"/><rect x="773.23" y="648.00" width="1.9" height="1.9" fill="#c6c6c6"/><rect x="773.23" y="663.04" width="1.9" height="1.9" fill="#c6c6c6"/><rect x="773.23" y="678.09" width="1.9" height="1.9" fill="#c6c6c6"/><rect x="773.23" y="693.13" width="1.9" height="1.9" fill="#c6c6c6"/><rect x="773.23" y="708.18" width="1.9" height="1.9" fill="#c6c6c6"/><rect x="773.23" y="723.22" width="1.9" height="1.9" fill="#c6c6c6"/><rect x="863.50" y="271.87" width="1.9" height="1.9" fill="#c6c6c6"/><rect x="863.50" y="286.92" width="1.9" height="1.9" fill="#c6c6c6"/><rect x="863.50" y="301.96" width="1.9" height="1.9" fill="#c6c6c6"/><rect x="863.50" y="317.01" width="1.9" height="1.9" fill="#c6c6c6"/><rect x="863.50" y="332.05" width="1.9" height="1.9" fill="#c6c6c6"/><rect x="863.50" y="347.10" width="1.9" height="1.9" fill="#c6c6c6"/><rect x="863.50" y="362.14" width="1.9" height="1.9" fill="#c6c6c6"/><rect x="863.50" y="377.19" width="1.9" height="1.9" fill="#c6c6c6"/><rect x="863.50" y="392.23" width="1.9" height="1.9" fill="#c6c6c6"/><rect x="863.50" y="407.28" width="1.9" height="1.9" fill="#c6c6c6"/><rect x="863.50" y="422.32" width="1.9" height="1.9" fill="#c6c6c6"/><rect x="863.50" y="437.37" width="1.9" height="1.9" fill="#c6c6c6"/><rect x="863.50" y="452.41" width="1.9" height="1.9" fill="#c6c6c6"/><rect x="863.50" y="467.46" width="1.9" height="1.9" fill="#c6c6c6"/><rect x="863.50" y="482.50" width="1.9" height="1.9" fill="#c6c6c6"/><rect x="863.50" y="497.55" width="1.9" height="1.9" fill="#c6c6c6"/><rect x="863.50" y="512.59" width="1.9" height="1.9" fill="#c6c6c6"/><rect x="863.50" y="527.64" width="1.9" height="1.9" fill="#c6c6c6"/><rect x="863.50" y="542.68" width="1.9" height="1.9" fill="#c6c6c6"/><rect x="863.50" y="557.73" width="1.9" height="1.9" fill="#c6c6c6"/><rect x="863.50" y="572.77" width="1.9" height="1.9" fill="#c6c6c6"/><rect x="863.50" y="587.82" width="1.9" height="1.9" fill="#c6c6c6"/><rect x="863.50" y="602.86" width="1.9" height="1.9" fill="#c6c6c6"/><rect x="863.50" y="617.91" width="1.9" height="1.9" fill="#c6c6c6"/><rect x="863.50" y="632.95" width="1.9" height="1.9" fill="#c6c6c6"/><rect x="863.50" y="648.00" width="1.9" height="1.9" fill="#c6c6c6"/><rect x="863.50" y="663.04" width="1.9" height="1.9" fill="#c6c6c6"/><rect x="863.50" y="678.09" width="1.9" height="1.9" fill="#c6c6c6"/><rect x="863.50" y="693.13" width="1.9" height="1.9" fill="#c6c6c6"/><rect x="863.50" y="708.18" width="1.9" height="1.9" fill="#c6c6c6"/><rect x="863.50" y="723.22" width="1.9" height="1.9" fill="#c6c6c6"/><rect x="953.77" y="268.11" width="1.9" height="1.9" fill="#c6c6c6"/><rect x="953.77" y="275.63" width="1.9" height="1.9" fill="#c6c6c6"/><rect x="953.77" y="283.15" width="1.9" height="1.9" fill="#c6c6c6"/><rect x="953.77" y="290.68" width="1.9" height="1.9" fill="#c6c6c6"/><rect x="953.77" y="298.20" width="1.9" height="1.9" fill="#c6c6c6"/><rect x="953.77" y="305.72" width="1.9" height="1.9" fill="#c6c6c6"/><rect x="953.77" y="313.24" width="1.9" height="1.9" fill="#c6c6c6"/><rect x="953.77" y="320.77" width="1.9" height="1.9" fill="#c6c6c6"/><rect x="953.77" y="328.29" width="1.9" height="1.9" fill="#c6c6c6"/><rect x="953.77" y="335.81" width="1.9" height="1.9" fill="#c6c6c6"/><rect x="953.77" y="343.33" width="1.9" height="1.9" fill="#c6c6c6"/><rect x="953.77" y="350.86" width="1.9" height="1.9" fill="#c6c6c6"/><rect x="953.77" y="358.38" width="1.9" height="1.9" fill="#c6c6c6"/><rect x="953.77" y="365.90" width="1.9" height="1.9" fill="#c6c6c6"/><rect x="953.77" y="373.42" width="1.9" height="1.9" fill="#c6c6c6"/><rect x="953.77" y="380.95" width="1.9" height="1.9" fill="#c6c6c6"/><rect x="953.77" y="388.47" width="1.9" height="1.9" fill="#c6c6c6"/><rect x="953.77" y="395.99" width="1.9" height="1.9" fill="#c6c6c6"/><rect x="953.77" y="403.51" width="1.9" height="1.9" fill="#c6c6c6"/><rect x="953.77" y="411.04" width="1.9" height="1.9" fill="#c6c6c6"/><rect x="953.77" y="418.56" width="1.9" height="1.9" fill="#c6c6c6"/><rect x="953.77" y="426.08" width="1.9" height="1.9" fill="#c6c6c6"/><rect x="953.77" y="433.60" width="1.9" height="1.9" fill="#c6c6c6"/><rect x="953.77" y="441.13" width="1.9" height="1.9" fill="#c6c6c6"/><rect x="953.77" y="448.65" width="1.9" height="1.9" fill="#c6c6c6"/><rect x="953.77" y="456.17" width="1.9" height="1.9" fill="#c6c6c6"/><rect x="953.77" y="463.69" width="1.9" height="1.9" fill="#c6c6c6"/><rect x="953.77" y="471.22" width="1.9" height="1.9" fill="#c6c6c6"/><rect x="953.77" y="478.74" width="1.9" height="1.9" fill="#c6c6c6"/><rect x="953.77" y="486.26" width="1.9" height="1.9" fill="#c6c6c6"/><rect x="953.77" y="493.78" width="1.9" height="1.9" fill="#c6c6c6"/><rect x="953.77" y="501.31" width="1.9" height="1.9" fill="#c6c6c6"/><rect x="953.77" y="508.83" width="1.9" height="1.9" fill="#c6c6c6"/><rect x="953.77" y="516.35" width="1.9" height="1.9" fill="#c6c6c6"/><rect x="953.77" y="523.87" width="1.9" height="1.9" fill="#c6c6c6"/><rect x="953.77" y="531.40" width="1.9" height="1.9" fill="#c6c6c6"/><rect x="953.77" y="538.92" width="1.9" height="1.9" fill="#c6c6c6"/><rect x="953.77" y="546.44" width="1.9" height="1.9" fill="#c6c6c6"/><rect x="953.77" y="553.96" width="1.9" height="1.9" fill="#c6c6c6"/><rect x="953.77" y="561.49" width="1.9" height="1.9" fill="#c6c6c6"/><rect x="953.77" y="569.01" width="1.9" height="1.9" fill="#c6c6c6"/><rect x="953.77" y="576.53" width="1.9" height="1.9" fill="#c6c6c6"/><rect x="953.77" y="584.05" width="1.9" height="1.9" fill="#c6c6c6"/><rect x="953.77" y="591.58" width="1.9" height="1.9" fill="#c6c6c6"/><rect x="953.77" y="599.10" width="1.9" height="1.9" fill="#c6c6c6"/><rect x="953.77" y="606.62" width="1.9" height="1.9" fill="#c6c6c6"/><rect x="953.77" y="614.14" width="1.9" height="1.9" fill="#c6c6c6"/><rect x="953.77" y="621.67" width="1.9" height="1.9" fill="#c6c6c6"/><rect x="953.77" y="629.19" width="1.9" height="1.9" fill="#c6c6c6"/><rect x="953.77" y="636.71" width="1.9" height="1.9" fill="#c6c6c6"/><rect x="953.77" y="644.23" width="1.9" height="1.9" fill="#c6c6c6"/><rect x="953.77" y="651.76" width="1.9" height="1.9" fill="#c6c6c6"/><rect x="953.77" y="659.28" width="1.9" height="1.9" fill="#c6c6c6"/><rect x="953.77" y="666.80" width="1.9" height="1.9" fill="#c6c6c6"/><rect x="953.77" y="674.33" width="1.9" height="1.9" fill="#c6c6c6"/><rect x="953.77" y="681.85" width="1.9" height="1.9" fill="#c6c6c6"/><rect x="953.77" y="689.37" width="1.9" height="1.9" fill="#c6c6c6"/><rect x="953.77" y="696.89" width="1.9" height="1.9" fill="#c6c6c6"/><rect x="953.77" y="704.42" width="1.9" height="1.9" fill="#c6c6c6"/><rect x="953.77" y="711.94" width="1.9" height="1.9" fill="#c6c6c6"/><rect x="953.77" y="719.46" width="1.9" height="1.9" fill="#c6c6c6"/><rect x="953.77" y="726.98" width="1.9" height="1.9" fill="#c6c6c6"/><rect x="1044.04" y="271.87" width="1.9" height="1.9" fill="#c6c6c6"/><rect x="1044.04" y="286.92" width="1.9" height="1.9" fill="#c6c6c6"/><rect x="1044.04" y="301.96" width="1.9" height="1.9" fill="#c6c6c6"/><rect x="1044.04" y="317.01" width="1.9" height="1.9" fill="#c6c6c6"/><rect x="1044.04" y="332.05" width="1.9" height="1.9" fill="#c6c6c6"/><rect x="1044.04" y="347.10" width="1.9" height="1.9" fill="#c6c6c6"/><rect x="1044.04" y="362.14" width="1.9" height="1.9" fill="#c6c6c6"/><rect x="1044.04" y="377.19" width="1.9" height="1.9" fill="#c6c6c6"/><rect x="1044.04" y="392.23" width="1.9" height="1.9" fill="#c6c6c6"/><rect x="1044.04" y="407.28" width="1.9" height="1.9" fill="#c6c6c6"/><rect x="1044.04" y="422.32" width="1.9" height="1.9" fill="#c6c6c6"/><rect x="1044.04" y="437.37" width="1.9" height="1.9" fill="#c6c6c6"/><rect x="1044.04" y="452.41" width="1.9" height="1.9" fill="#c6c6c6"/><rect x="1044.04" y="467.46" width="1.9" height="1.9" fill="#c6c6c6"/><rect x="1044.04" y="482.50" width="1.9" height="1.9" fill="#c6c6c6"/><rect x="1044.04" y="497.55" width="1.9" height="1.9" fill="#c6c6c6"/><rect x="1044.04" y="512.59" width="1.9" height="1.9" fill="#c6c6c6"/><rect x="1044.04" y="527.64" width="1.9" height="1.9" fill="#c6c6c6"/><rect x="1044.04" y="542.68" width="1.9" height="1.9" fill="#c6c6c6"/><rect x="1044.04" y="557.73" width="1.9" height="1.9" fill="#c6c6c6"/><rect x="1044.04" y="572.77" width="1.9" height="1.9" fill="#c6c6c6"/><rect x="1044.04" y="587.82" width="1.9" height="1.9" fill="#c6c6c6"/><rect x="1044.04" y="602.86" width="1.9" height="1.9" fill="#c6c6c6"/><rect x="1044.04" y="617.91" width="1.9" height="1.9" fill="#c6c6c6"/><rect x="1044.04" y="632.95" width="1.9" height="1.9" fill="#c6c6c6"/><rect x="1044.04" y="648.00" width="1.9" height="1.9" fill="#c6c6c6"/><rect x="1044.04" y="663.04" width="1.9" height="1.9" fill="#c6c6c6"/><rect x="1044.04" y="678.09" width="1.9" height="1.9" fill="#c6c6c6"/><rect x="1044.04" y="693.13" width="1.9" height="1.9" fill="#c6c6c6"/><rect x="1044.04" y="708.18" width="1.9" height="1.9" fill="#c6c6c6"/><rect x="1044.04" y="723.22" width="1.9" height="1.9" fill="#c6c6c6"/><rect x="419.67" y="354.62" width="1.9" height="1.9" fill="#c6c6c6"/><rect x="434.72" y="354.62" width="1.9" height="1.9" fill="#c6c6c6"/><rect x="449.76" y="354.62" width="1.9" height="1.9" fill="#c6c6c6"/><rect x="464.81" y="354.62" width="1.9" height="1.9" fill="#c6c6c6"/><rect x="479.85" y="354.62" width="1.9" height="1.9" fill="#c6c6c6"/><rect x="494.90" y="354.62" width="1.9" height="1.9" fill="#c6c6c6"/><rect x="509.94" y="354.62" width="1.9" height="1.9" fill="#c6c6c6"/><rect x="524.99" y="354.62" width="1.9" height="1.9" fill="#c6c6c6"/><rect x="540.03" y="354.62" width="1.9" height="1.9" fill="#c6c6c6"/><rect x="555.07" y="354.62" width="1.9" height="1.9" fill="#c6c6c6"/><rect x="570.12" y="354.62" width="1.9" height="1.9" fill="#c6c6c6"/><rect x="585.16" y="354.62" width="1.9" height="1.9" fill="#c6c6c6"/><rect x="600.21" y="354.62" width="1.9" height="1.9" fill="#c6c6c6"/><rect x="615.25" y="354.62" width="1.9" height="1.9" fill="#c6c6c6"/><rect x="630.30" y="354.62" width="1.9" height="1.9" fill="#c6c6c6"/><rect x="645.34" y="354.62" width="1.9" height="1.9" fill="#c6c6c6"/><rect x="660.39" y="354.62" width="1.9" height="1.9" fill="#c6c6c6"/><rect x="675.43" y="354.62" width="1.9" height="1.9" fill="#c6c6c6"/><rect x="690.48" y="354.62" width="1.9" height="1.9" fill="#c6c6c6"/><rect x="705.52" y="354.62" width="1.9" height="1.9" fill="#c6c6c6"/><rect x="720.57" y="354.62" width="1.9" height="1.9" fill="#c6c6c6"/><rect x="735.61" y="354.62" width="1.9" height="1.9" fill="#c6c6c6"/><rect x="750.66" y="354.62" width="1.9" height="1.9" fill="#c6c6c6"/><rect x="765.70" y="354.62" width="1.9" height="1.9" fill="#c6c6c6"/><rect x="780.75" y="354.62" width="1.9" height="1.9" fill="#c6c6c6"/><rect x="795.79" y="354.62" width="1.9" height="1.9" fill="#c6c6c6"/><rect x="810.84" y="354.62" width="1.9" height="1.9" fill="#c6c6c6"/><rect x="825.88" y="354.62" width="1.9" height="1.9" fill="#c6c6c6"/><rect x="840.93" y="354.62" width="1.9" height="1.9" fill="#c6c6c6"/><rect x="855.97" y="354.62" width="1.9" height="1.9" fill="#c6c6c6"/><rect x="871.02" y="354.62" width="1.9" height="1.9" fill="#c6c6c6"/><rect x="886.06" y="354.62" width="1.9" height="1.9" fill="#c6c6c6"/><rect x="901.11" y="354.62" width="1.9" height="1.9" fill="#c6c6c6"/><rect x="916.15" y="354.62" width="1.9" height="1.9" fill="#c6c6c6"/><rect x="931.20" y="354.62" width="1.9" height="1.9" fill="#c6c6c6"/><rect x="946.24" y="354.62" width="1.9" height="1.9" fill="#c6c6c6"/><rect x="961.29" y="354.62" width="1.9" height="1.9" fill="#c6c6c6"/><rect x="976.33" y="354.62" width="1.9" height="1.9" fill="#c6c6c6"/><rect x="991.38" y="354.62" width="1.9" height="1.9" fill="#c6c6c6"/><rect x="1006.42" y="354.62" width="1.9" height="1.9" fill="#c6c6c6"/><rect x="1021.47" y="354.62" width="1.9" height="1.9" fill="#c6c6c6"/><rect x="1036.51" y="354.62" width="1.9" height="1.9" fill="#c6c6c6"/><rect x="1051.56" y="354.62" width="1.9" height="1.9" fill="#c6c6c6"/><rect x="1066.60" y="354.62" width="1.9" height="1.9" fill="#c6c6c6"/><rect x="1081.65" y="354.62" width="1.9" height="1.9" fill="#c6c6c6"/><rect x="419.67" y="444.89" width="1.9" height="1.9" fill="#c6c6c6"/><rect x="434.72" y="444.89" width="1.9" height="1.9" fill="#c6c6c6"/><rect x="449.76" y="444.89" width="1.9" height="1.9" fill="#c6c6c6"/><rect x="464.81" y="444.89" width="1.9" height="1.9" fill="#c6c6c6"/><rect x="479.85" y="444.89" width="1.9" height="1.9" fill="#c6c6c6"/><rect x="494.90" y="444.89" width="1.9" height="1.9" fill="#c6c6c6"/><rect x="509.94" y="444.89" width="1.9" height="1.9" fill="#c6c6c6"/><rect x="524.99" y="444.89" width="1.9" height="1.9" fill="#c6c6c6"/><rect x="540.03" y="444.89" width="1.9" height="1.9" fill="#c6c6c6"/><rect x="555.07" y="444.89" width="1.9" height="1.9" fill="#c6c6c6"/><rect x="570.12" y="444.89" width="1.9" height="1.9" fill="#c6c6c6"/><rect x="585.16" y="444.89" width="1.9" height="1.9" fill="#c6c6c6"/><rect x="600.21" y="444.89" width="1.9" height="1.9" fill="#c6c6c6"/><rect x="615.25" y="444.89" width="1.9" height="1.9" fill="#c6c6c6"/><rect x="630.30" y="444.89" width="1.9" height="1.9" fill="#c6c6c6"/><rect x="645.34" y="444.89" width="1.9" height="1.9" fill="#c6c6c6"/><rect x="660.39" y="444.89" width="1.9" height="1.9" fill="#c6c6c6"/><rect x="675.43" y="444.89" width="1.9" height="1.9" fill="#c6c6c6"/><rect x="690.48" y="444.89" width="1.9" height="1.9" fill="#c6c6c6"/><rect x="705.52" y="444.89" width="1.9" height="1.9" fill="#c6c6c6"/><rect x="720.57" y="444.89" width="1.9" height="1.9" fill="#c6c6c6"/><rect x="735.61" y="444.89" width="1.9" height="1.9" fill="#c6c6c6"/><rect x="750.66" y="444.89" width="1.9" height="1.9" fill="#c6c6c6"/><rect x="765.70" y="444.89" width="1.9" height="1.9" fill="#c6c6c6"/><rect x="780.75" y="444.89" width="1.9" height="1.9" fill="#c6c6c6"/><rect x="795.79" y="444.89" width="1.9" height="1.9" fill="#c6c6c6"/><rect x="810.84" y="444.89" width="1.9" height="1.9" fill="#c6c6c6"/><rect x="825.88" y="444.89" width="1.9" height="1.9" fill="#c6c6c6"/><rect x="840.93" y="444.89" width="1.9" height="1.9" fill="#c6c6c6"/><rect x="855.97" y="444.89" width="1.9" height="1.9" fill="#c6c6c6"/><rect x="871.02" y="444.89" width="1.9" height="1.9" fill="#c6c6c6"/><rect x="886.06" y="444.89" width="1.9" height="1.9" fill="#c6c6c6"/><rect x="901.11" y="444.89" width="1.9" height="1.9" fill="#c6c6c6"/><rect x="916.15" y="444.89" width="1.9" height="1.9" fill="#c6c6c6"/><rect x="931.20" y="444.89" width="1.9" height="1.9" fill="#c6c6c6"/><rect x="946.24" y="444.89" width="1.9" height="1.9" fill="#c6c6c6"/><rect x="961.29" y="444.89" width="1.9" height="1.9" fill="#c6c6c6"/><rect x="976.33" y="444.89" width="1.9" height="1.9" fill="#c6c6c6"/><rect x="991.38" y="444.89" width="1.9" height="1.9" fill="#c6c6c6"/><rect x="1006.42" y="444.89" width="1.9" height="1.9" fill="#c6c6c6"/><rect x="1021.47" y="444.89" width="1.9" height="1.9" fill="#c6c6c6"/><rect x="1036.51" y="444.89" width="1.9" height="1.9" fill="#c6c6c6"/><rect x="1051.56" y="444.89" width="1.9" height="1.9" fill="#c6c6c6"/><rect x="1066.60" y="444.89" width="1.9" height="1.9" fill="#c6c6c6"/><rect x="1081.65" y="444.89" width="1.9" height="1.9" fill="#c6c6c6"/><rect x="419.67" y="535.16" width="1.9" height="1.9" fill="#c6c6c6"/><rect x="434.72" y="535.16" width="1.9" height="1.9" fill="#c6c6c6"/><rect x="449.76" y="535.16" width="1.9" height="1.9" fill="#c6c6c6"/><rect x="464.81" y="535.16" width="1.9" height="1.9" fill="#c6c6c6"/><rect x="479.85" y="535.16" width="1.9" height="1.9" fill="#c6c6c6"/><rect x="494.90" y="535.16" width="1.9" height="1.9" fill="#c6c6c6"/><rect x="509.94" y="535.16" width="1.9" height="1.9" fill="#c6c6c6"/><rect x="524.99" y="535.16" width="1.9" height="1.9" fill="#c6c6c6"/><rect x="540.03" y="535.16" width="1.9" height="1.9" fill="#c6c6c6"/><rect x="555.07" y="535.16" width="1.9" height="1.9" fill="#c6c6c6"/><rect x="570.12" y="535.16" width="1.9" height="1.9" fill="#c6c6c6"/><rect x="585.16" y="535.16" width="1.9" height="1.9" fill="#c6c6c6"/><rect x="600.21" y="535.16" width="1.9" height="1.9" fill="#c6c6c6"/><rect x="615.25" y="535.16" width="1.9" height="1.9" fill="#c6c6c6"/><rect x="630.30" y="535.16" width="1.9" height="1.9" fill="#c6c6c6"/><rect x="645.34" y="535.16" width="1.9" height="1.9" fill="#c6c6c6"/><rect x="660.39" y="535.16" width="1.9" height="1.9" fill="#c6c6c6"/><rect x="675.43" y="535.16" width="1.9" height="1.9" fill="#c6c6c6"/><rect x="690.48" y="535.16" width="1.9" height="1.9" fill="#c6c6c6"/><rect x="705.52" y="535.16" width="1.9" height="1.9" fill="#c6c6c6"/><rect x="720.57" y="535.16" width="1.9" height="1.9" fill="#c6c6c6"/><rect x="735.61" y="535.16" width="1.9" height="1.9" fill="#c6c6c6"/><rect x="750.66" y="535.16" width="1.9" height="1.9" fill="#c6c6c6"/><rect x="765.70" y="535.16" width="1.9" height="1.9" fill="#c6c6c6"/><rect x="780.75" y="535.16" width="1.9" height="1.9" fill="#c6c6c6"/><rect x="795.79" y="535.16" width="1.9" height="1.9" fill="#c6c6c6"/><rect x="810.84" y="535.16" width="1.9" height="1.9" fill="#c6c6c6"/><rect x="825.88" y="535.16" width="1.9" height="1.9" fill="#c6c6c6"/><rect x="840.93" y="535.16" width="1.9" height="1.9" fill="#c6c6c6"/><rect x="855.97" y="535.16" width="1.9" height="1.9" fill="#c6c6c6"/><rect x="871.02" y="535.16" width="1.9" height="1.9" fill="#c6c6c6"/><rect x="886.06" y="535.16" width="1.9" height="1.9" fill="#c6c6c6"/><rect x="901.11" y="535.16" width="1.9" height="1.9" fill="#c6c6c6"/><rect x="916.15" y="535.16" width="1.9" height="1.9" fill="#c6c6c6"/><rect x="931.20" y="535.16" width="1.9" height="1.9" fill="#c6c6c6"/><rect x="946.24" y="535.16" width="1.9" height="1.9" fill="#c6c6c6"/><rect x="961.29" y="535.16" width="1.9" height="1.9" fill="#c6c6c6"/><rect x="976.33" y="535.16" width="1.9" height="1.9" fill="#c6c6c6"/><rect x="991.38" y="535.16" width="1.9" height="1.9" fill="#c6c6c6"/><rect x="1006.42" y="535.16" width="1.9" height="1.9" fill="#c6c6c6"/><rect x="1021.47" y="535.16" width="1.9" height="1.9" fill="#c6c6c6"/><rect x="1036.51" y="535.16" width="1.9" height="1.9" fill="#c6c6c6"/><rect x="1051.56" y="535.16" width="1.9" height="1.9" fill="#c6c6c6"/><rect x="1066.60" y="535.16" width="1.9" height="1.9" fill="#c6c6c6"/><rect x="1081.65" y="535.16" width="1.9" height="1.9" fill="#c6c6c6"/><rect x="419.67" y="625.43" width="1.9" height="1.9" fill="#c6c6c6"/><rect x="434.72" y="625.43" width="1.9" height="1.9" fill="#c6c6c6"/><rect x="449.76" y="625.43" width="1.9" height="1.9" fill="#c6c6c6"/><rect x="464.81" y="625.43" width="1.9" height="1.9" fill="#c6c6c6"/><rect x="479.85" y="625.43" width="1.9" height="1.9" fill="#c6c6c6"/><rect x="494.90" y="625.43" width="1.9" height="1.9" fill="#c6c6c6"/><rect x="509.94" y="625.43" width="1.9" height="1.9" fill="#c6c6c6"/><rect x="524.99" y="625.43" width="1.9" height="1.9" fill="#c6c6c6"/><rect x="540.03" y="625.43" width="1.9" height="1.9" fill="#c6c6c6"/><rect x="555.07" y="625.43" width="1.9" height="1.9" fill="#c6c6c6"/><rect x="570.12" y="625.43" width="1.9" height="1.9" fill="#c6c6c6"/><rect x="585.16" y="625.43" width="1.9" height="1.9" fill="#c6c6c6"/><rect x="600.21" y="625.43" width="1.9" height="1.9" fill="#c6c6c6"/><rect x="615.25" y="625.43" width="1.9" height="1.9" fill="#c6c6c6"/><rect x="630.30" y="625.43" width="1.9" height="1.9" fill="#c6c6c6"/><rect x="645.34" y="625.43" width="1.9" height="1.9" fill="#c6c6c6"/><rect x="660.39" y="625.43" width="1.9" height="1.9" fill="#c6c6c6"/><rect x="675.43" y="625.43" width="1.9" height="1.9" fill="#c6c6c6"/><rect x="690.48" y="625.43" width="1.9" height="1.9" fill="#c6c6c6"/><rect x="705.52" y="625.43" width="1.9" height="1.9" fill="#c6c6c6"/><rect x="720.57" y="625.43" width="1.9" height="1.9" fill="#c6c6c6"/><rect x="735.61" y="625.43" width="1.9" height="1.9" fill="#c6c6c6"/><rect x="750.66" y="625.43" width="1.9" height="1.9" fill="#c6c6c6"/><rect x="765.70" y="625.43" width="1.9" height="1.9" fill="#c6c6c6"/><rect x="780.75" y="625.43" width="1.9" height="1.9" fill="#c6c6c6"/><rect x="795.79" y="625.43" width="1.9" height="1.9" fill="#c6c6c6"/><rect x="810.84" y="625.43" width="1.9" height="1.9" fill="#c6c6c6"/><rect x="825.88" y="625.43" width="1.9" height="1.9" fill="#c6c6c6"/><rect x="840.93" y="625.43" width="1.9" height="1.9" fill="#c6c6c6"/><rect x="855.97" y="625.43" width="1.9" height="1.9" fill="#c6c6c6"/><rect x="871.02" y="625.43" width="1.9" height="1.9" fill="#c6c6c6"/><rect x="886.06" y="625.43" width="1.9" height="1.9" fill="#c6c6c6"/><rect x="901.11" y="625.43" width="1.9" height="1.9" fill="#c6c6c6"/><rect x="916.15" y="625.43" width="1.9" height="1.9" fill="#c6c6c6"/><rect x="931.20" y="625.43" width="1.9" height="1.9" fill="#c6c6c6"/><rect x="946.24" y="625.43" width="1.9" height="1.9" fill="#c6c6c6"/><rect x="961.29" y="625.43" width="1.9" height="1.9" fill="#c6c6c6"/><rect x="976.33" y="625.43" width="1.9" height="1.9" fill="#c6c6c6"/><rect x="991.38" y="625.43" width="1.9" height="1.9" fill="#c6c6c6"/><rect x="1006.42" y="625.43" width="1.9" height="1.9" fill="#c6c6c6"/><rect x="1021.47" y="625.43" width="1.9" height="1.9" fill="#c6c6c6"/><rect x="1036.51" y="625.43" width="1.9" height="1.9" fill="#c6c6c6"/><rect x="1051.56" y="625.43" width="1.9" height="1.9" fill="#c6c6c6"/><rect x="1066.60" y="625.43" width="1.9" height="1.9" fill="#c6c6c6"/><rect x="1081.65" y="625.43" width="1.9" height="1.9" fill="#c6c6c6"/><rect x="419.67" y="715.70" width="1.9" height="1.9" fill="#c6c6c6"/><rect x="434.72" y="715.70" width="1.9" height="1.9" fill="#c6c6c6"/><rect x="449.76" y="715.70" width="1.9" height="1.9" fill="#c6c6c6"/><rect x="464.81" y="715.70" width="1.9" height="1.9" fill="#c6c6c6"/><rect x="479.85" y="715.70" width="1.9" height="1.9" fill="#c6c6c6"/><rect x="494.90" y="715.70" width="1.9" height="1.9" fill="#c6c6c6"/><rect x="509.94" y="715.70" width="1.9" height="1.9" fill="#c6c6c6"/><rect x="524.99" y="715.70" width="1.9" height="1.9" fill="#c6c6c6"/><rect x="540.03" y="715.70" width="1.9" height="1.9" fill="#c6c6c6"/><rect x="555.07" y="715.70" width="1.9" height="1.9" fill="#c6c6c6"/><rect x="570.12" y="715.70" width="1.9" height="1.9" fill="#c6c6c6"/><rect x="585.16" y="715.70" width="1.9" height="1.9" fill="#c6c6c6"/><rect x="600.21" y="715.70" width="1.9" height="1.9" fill="#c6c6c6"/><rect x="615.25" y="715.70" width="1.9" height="1.9" fill="#c6c6c6"/><rect x="630.30" y="715.70" width="1.9" height="1.9" fill="#c6c6c6"/><rect x="645.34" y="715.70" width="1.9" height="1.9" fill="#c6c6c6"/><rect x="660.39" y="715.70" width="1.9" height="1.9" fill="#c6c6c6"/><rect x="675.43" y="715.70" width="1.9" height="1.9" fill="#c6c6c6"/><rect x="690.48" y="715.70" width="1.9" height="1.9" fill="#c6c6c6"/><rect x="705.52" y="715.70" width="1.9" height="1.9" fill="#c6c6c6"/><rect x="720.57" y="715.70" width="1.9" height="1.9" fill="#c6c6c6"/><rect x="735.61" y="715.70" width="1.9" height="1.9" fill="#c6c6c6"/><rect x="750.66" y="715.70" width="1.9" height="1.9" fill="#c6c6c6"/><rect x="765.70" y="715.70" width="1.9" height="1.9" fill="#c6c6c6"/><rect x="780.75" y="715.70" width="1.9" height="1.9" fill="#c6c6c6"/><rect x="795.79" y="715.70" width="1.9" height="1.9" fill="#c6c6c6"/><rect x="810.84" y="715.70" width="1.9" height="1.9" fill="#c6c6c6"/><rect x="825.88" y="715.70" width="1.9" height="1.9" fill="#c6c6c6"/><rect x="840.93" y="715.70" width="1.9" height="1.9" fill="#c6c6c6"/><rect x="855.97" y="715.70" width="1.9" height="1.9" fill="#c6c6c6"/><rect x="871.02" y="715.70" width="1.9" height="1.9" fill="#c6c6c6"/><rect x="886.06" y="715.70" width="1.9" height="1.9" fill="#c6c6c6"/><rect x="901.11" y="715.70" width="1.9" height="1.9" fill="#c6c6c6"/><rect x="916.15" y="715.70" width="1.9" height="1.9" fill="#c6c6c6"/><rect x="931.20" y="715.70" width="1.9" height="1.9" fill="#c6c6c6"/><rect x="946.24" y="715.70" width="1.9" height="1.9" fill="#c6c6c6"/><rect x="961.29" y="715.70" width="1.9" height="1.9" fill="#c6c6c6"/><rect x="976.33" y="715.70" width="1.9" height="1.9" fill="#c6c6c6"/><rect x="991.38" y="715.70" width="1.9" height="1.9" fill="#c6c6c6"/><rect x="1006.42" y="715.70" width="1.9" height="1.9" fill="#c6c6c6"/><rect x="1021.47" y="715.70" width="1.9" height="1.9" fill="#c6c6c6"/><rect x="1036.51" y="715.70" width="1.9" height="1.9" fill="#c6c6c6"/><rect x="1051.56" y="715.70" width="1.9" height="1.9" fill="#c6c6c6"/><rect x="1066.60" y="715.70" width="1.9" height="1.9" fill="#c6c6c6"/><rect x="1081.65" y="715.70" width="1.9" height="1.9" fill="#c6c6c6"/><path d="M424 276.2 V730 M424 276.2 H1097" stroke="#ff3c3c" stroke-width="1.4" stroke-dasharray="2.7 2.55" fill="none"/><rect x="482.1" y="335.3" width="359" height="358" fill="none" stroke="#3a3ade" stroke-width="1.15" stroke-dasharray="4.4 4.35"/><rect x="525.9" y="389" width="271.3" height="270.1" fill="none" stroke="#3a3ade" stroke-width="1.15" stroke-dasharray="4.4 4.35"/><path d="M661.50,405.87 C675.72,368.95 714.83,337.00 750.38,337.00 C801.92,337.00 839.25,376.05 839.25,422.20 C839.25,514.50 782.37,559.23 661.50,692.00 C540.63,559.23 483.75,514.50 483.75,422.20 C483.75,376.05 521.08,337.00 572.62,337.00 C608.17,337.00 647.28,368.95 661.50,405.87Z" fill="none" stroke="#000" stroke-width="2"/><path d="M661.50,441.99 C672.20,414.12 701.64,390.00 728.40,390.00 C767.20,390.00 795.30,419.48 795.30,454.32 C795.30,524.00 752.48,557.77 661.50,658.00 C570.52,557.77 527.70,524.00 527.70,454.32 C527.70,419.48 555.80,390.00 594.60,390.00 C621.36,390.00 650.80,414.12 661.50,441.99Z" fill="none" stroke="#000" stroke-width="2"/></svg>
<div class="a" style="left:334px;top:57px;width:393px;height:365px;background:#fff;border:1px solid #b6b6bc"></div>
<div class="grp" style="left:361px;top:81px;width:120px;height:53px"></div>
<div class="gl" style="left:370px;top:76px">Rückgängig</div>
<div class="grp" style="left:494px;top:81px;width:206px;height:53px"></div>
<div class="gl" style="left:503px;top:76px">Schneiden/Kopieren/Einfügen</div>
<div class="grp" style="left:361px;top:149px;width:120px;height:53px"></div>
<div class="gl" style="left:370px;top:144px">Gruppieren</div>
<div class="grp" style="left:494px;top:149px;width:206px;height:53px"></div>
<div class="gl" style="left:503px;top:144px">Bearbeiten</div>
<div class="grp" style="left:361px;top:217px;width:339px;height:53px"></div>
<div class="gl" style="left:370px;top:212px">Ausrichten</div>
<div class="grp" style="left:361px;top:285px;width:120px;height:53px"></div>
<div class="gl" style="left:370px;top:280px">Spiegeln</div>
<div class="grp" style="left:494px;top:285px;width:206px;height:53px"></div>
<div class="gl" style="left:503px;top:280px">Reihenfolge</div>
<div class="grp" style="left:361px;top:353px;width:339px;height:52px"></div>
<div class="gl" style="left:370px;top:348px">Prozess-Überlappung</div>
<svg class="a" style="left:0;top:0" width="1097" height="730"><g fill="#3a3956"><polygon points="378.9,109.2 396.6,109.2 387.7,118.6"/><path d="M384.6 109.4 C384.6 103 388.8 98.8 394.2 98.8 C400.8 98.8 405.4 104.4 405.2 111.8 C403.6 106.2 399.8 103.2 395.8 103.2 C392.4 103.2 390.4 105.6 390.6 109.4 Z"/></g><g fill="#c8cbd3" transform="translate(829 0) scale(-1 1)"><polygon points="378.9,109.2 396.6,109.2 387.7,118.6"/><path d="M384.6 109.4 C384.6 103 388.8 98.8 394.2 98.8 C400.8 98.8 405.4 104.4 405.2 111.8 C403.6 106.2 399.8 103.2 395.8 103.2 C392.4 103.2 390.4 105.6 390.6 109.4 Z"/></g><g fill="none" stroke="#3a3956" stroke-width="1.5">
<circle cx="517.8" cy="115.4" r="3.5"/><circle cx="531" cy="115.4" r="3.5"/>
<path d="M511.4 121.2 L515.2 119.6 M537.4 121.2 L533.6 119.6"/></g>
<g fill="#3a3956"><polygon points="517.5,95.8 518.8,95.8 527.6,109.4 530.4,113.2 529,114.2 522.2,109.6"/><polygon points="531.3,95.8 530,95.8 521.2,109.4 518.4,113.2 519.8,114.2 526.6,109.6"/></g><rect x="557" y="96.3" width="15" height="15.9" rx="1.6" fill="#3a3956"/><path d="M572 106.6 H581.4 V120.8 H567.6 V112.2" fill="none" stroke="#3a3956" stroke-width="1.4"/><path d="M608.6 103.8 H604.9 V120.3 H624.6 V103.8 H620.8" fill="none" stroke="#3a3956" stroke-width="2"/><rect x="604.2" y="118.6" width="21.2" height="3" fill="#3a3956"/><rect x="608.9" y="101.8" width="11.4" height="4.6" fill="#fff" stroke="#3a3956" stroke-width="1.3"/><path d="M611.8 101.8 V100.4 A3 3 0 0 1 617.8 100.4 V101.8" fill="#fff" stroke="#3a3956" stroke-width="1.3"/><circle cx="614.8" cy="99.6" r="0.8" fill="#3a3956"/><rect x="647.3" y="96.3" width="15.1" height="15.9" rx="1.6" fill="#3a3956"/><path d="M662.4 108.2 H672 V121 H658.2 V112.2" fill="none" stroke="#3a3956" stroke-width="1.3"/><path d="M662.6 97.4 C666.6 98.2 669.2 101.4 669.6 106" fill="none" stroke="#3a3956" stroke-width="2"/><polygon points="665.6,105.6 673.4,105.6 669.4,111" fill="#3a3956"/><rect x="381.6" y="167.6" width="21" height="20.6" fill="none" stroke="#3a3956" stroke-width="1.3"/><circle cx="381.6" cy="167.6" r="2.2" fill="#3a3956"/><circle cx="392.1" cy="167.6" r="2.2" fill="#3a3956"/><circle cx="402.6" cy="167.6" r="2.2" fill="#3a3956"/><circle cx="381.6" cy="177.9" r="2.2" fill="#3a3956"/><circle cx="402.6" cy="177.9" r="2.2" fill="#3a3956"/><circle cx="381.6" cy="188.2" r="2.2" fill="#3a3956"/><circle cx="392.1" cy="188.2" r="2.2" fill="#3a3956"/><circle cx="402.6" cy="188.2" r="2.2" fill="#3a3956"/><rect x="385" y="172.2" width="9.6" height="3.8" rx="1" fill="#3a3956"/><rect x="390.5" y="179.8" width="8.2" height="3.3" rx="0.6" fill="none" stroke="#3a3956" stroke-width="1.1"/><rect x="426.2" y="167" width="22" height="22" fill="none" stroke="#c8cbd3" stroke-width="1.4" stroke-dasharray="3 2.4"/><rect x="430.6" y="172.2" width="9.2" height="4.2" rx="1" fill="#c8cbd3"/><rect x="435.6" y="179.8" width="8.6" height="3.6" rx="0.6" fill="none" stroke="#c8cbd3" stroke-width="1.1"/><rect x="513.6" y="165.2" width="20.8" height="20.4" fill="none" stroke="#3a3956" stroke-width="1.8" stroke-dasharray="3.2 2.2"/><circle cx="519.7" cy="171.4" r="3.7" fill="#3a3956"/><polygon points="526.3,173.6 531.4,182.2 521.2,182.2" fill="#3a3956"/><rect x="531" y="181" width="5" height="5" fill="#fff"/><polygon points="532.1,183.3 541,186.2 536.6,188.4" fill="#3a3956"/><path d="M536.2 187.6 L542.6 193.4" stroke="#3a3956" stroke-width="2"/><polygon points="532.1,183.3 541,186.2 535,191.5" fill="#3a3956"/><path d="M556.6 169.3 H582.5" stroke="#3a3956" stroke-width="1.6"/><path d="M564.6 168.8 V165.4 H574.5 V168.8" fill="none" stroke="#3a3956" stroke-width="1.3"/><path d="M560.6 170 L562.6 189.8 Q562.8 190.8 563.8 190.8 H575.4 Q576.4 190.8 576.6 189.8 L578.6 170" fill="none" stroke="#3a3956" stroke-width="1.5"/><path d="M566.2 174 L566.6 186.6 M569.6 174 V186.6 M573 174 L572.6 186.6" stroke="#3a3956" stroke-width="1.3"/><path d="M628 166.2 H603.2 V189.6 H628" fill="none" stroke="#c8cbd3" stroke-width="1.6"/><text x="614.8" y="186.9" font-size="24.5" font-weight="bold" fill="#c8cbd3" text-anchor="middle" font-family="Liberation Serif">T</text><circle cx="659.3" cy="179.8" r="10.4" fill="none" stroke="#3a3956" stroke-width="1.5"/><circle cx="659" cy="179.6" r="3.6" fill="none" stroke="#3a3956" stroke-width="1.5"/><path d="M662.8 172.5 V179.6" stroke="#3a3956" stroke-width="1.4"/><path d="M663.3 161.6 V168 M670.2 161.6 V168 M663.3 164.8 H670.2 M670.2 168.5 V173" stroke="#3a3956" stroke-width="1.3"/><g fill="#3a3956"><rect x="379.6" y="233" width="1.5" height="25"/><rect x="384.4" y="249.1" width="20.8" height="7.1"/><rect x="437" y="233" width="1.5" height="25"/><rect x="427.1" y="249.1" width="20.7" height="7.1"/><rect x="493.8" y="233" width="1.5" height="25"/><rect x="469.7" y="249.1" width="20.8" height="7.1"/><rect x="515.1" y="233.3" width="26.1" height="1.6"/><rect x="531.1" y="237.8" width="7.9" height="20.2"/><rect x="560.1" y="244.8" width="26.1" height="1.5"/><rect x="562.3" y="235.5" width="7.5" height="20.7"/><rect x="605.2" y="257" width="26" height="1.6"/><rect x="621.7" y="233.1" width="7.7" height="21.1"/></g><g fill="#fff" stroke="#3a3956" stroke-width="1.2"><rect x="385" y="236.1" width="9" height="9" rx="1"/><rect x="433" y="236.1" width="9.6" height="9" rx="1"/><rect x="481" y="236.1" width="9" height="9" rx="1"/><rect x="517.5" y="238.4" width="10" height="9" rx="1"/><rect x="573.2" y="241.4" width="10" height="9" rx="1"/><rect x="608.1" y="244.1" width="10.1" height="9.2" rx="1"/></g><g fill="#c8cbd3"><rect x="379.3" y="312.6" width="25.6" height="2"/><polygon points="383.9,310.2 400,310.2 400,301"/><polygon points="383.9,317.2 400,317.2 400,326.6"/><rect x="436.1" y="301" width="2" height="25.6"/><polygon points="424.8,321.7 433.6,321.7 433.6,305.6"/><polygon points="441.1,305.6 441.1,321.7 450.1,321.7"/></g><polygon points="514.5,321 524.5,316.0 534.5,321 524.5,326.0" fill="#fff" stroke="#c8cbd3" stroke-width="1.2"/><polygon points="514.5,313.6 524.5,308.6 534.5,313.6 524.5,318.6" fill="#fff" stroke="#c8cbd3" stroke-width="1.2"/><polygon points="514.5,306.2 524.5,301.2 534.5,306.2 524.5,311.2" fill="#c8cbd3" stroke="#c8cbd3" stroke-width="1.2"/><polygon points="556.0,318.5 566,313.5 576.0,318.5 566,323.5" fill="#fff" stroke="#c8cbd3" stroke-width="1.2"/><polygon points="556.0,311 566,306.0 576.0,311 566,316.0" fill="#c8cbd3" stroke="#c8cbd3" stroke-width="1.2"/><path d="M574 324 Q579 322.5 580.5 317" fill="none" stroke="#c8cbd3" stroke-width="1.6"/><polygon points="577.6,317.8 583.2,317.8 581.4,313.6" fill="#c8cbd3"/><polygon points="601.5,318.5 611.5,313.5 621.5,318.5 611.5,323.5" fill="#c8cbd3" stroke="#c8cbd3" stroke-width="1.2"/><polygon points="601.5,311 611.5,306.0 621.5,311 611.5,316.0" fill="#fff" stroke="#c8cbd3" stroke-width="1.2"/><path d="M617 306 Q623 306.5 624.4 313" fill="none" stroke="#c8cbd3" stroke-width="1.6"/><polygon points="621.6,312 627.4,312 624.4,316.6" fill="#c8cbd3"/><polygon points="650.0,321 660,316.0 670.0,321 660,326.0" fill="#c8cbd3" stroke="#c8cbd3" stroke-width="1.2"/><polygon points="650.0,313.6 660,308.6 670.0,313.6 660,318.6" fill="#fff" stroke="#c8cbd3" stroke-width="1.2"/><polygon points="650.0,306.2 660,301.2 670.0,306.2 660,311.2" fill="#fff" stroke="#c8cbd3" stroke-width="1.2"/><g fill="none" stroke="#3a3956" stroke-width="1.3"><path d="M389.59999999999997 378.2 A8.4 8.4 0 1 0 395.09999999999997 384.2 L405.5 381.4 L392.2 368.7 Z"/></g><g fill="none" stroke="#3a3956" stroke-width="1.3"><circle cx="433" cy="386.3" r="8.4"/><polygon points="438,368.7 451.3,381.4 432.8,386.4"/></g><g fill="none" stroke="#3a3956" stroke-width="1.3"><circle cx="477.9" cy="386.3" r="8.4"/><path d="M481.2 378.6 L482.9 368.7 L496.2 381.4 L486.2 384.2"/></g><g fill="none" stroke="#b520e6" stroke-width="1.4"><circle cx="523.6" cy="386.3" r="8.4" stroke-dasharray="3 1.8"/><polygon points="528.6,368.7 541.9,381.4 523.4,386.4"/></g></svg>
<div class="a" style="left:523px;top:403px;width:81px;height:22px;background:#fff;border:1px solid #8a8a8a;font-size:11.6px;color:#2a2a2a;line-height:22px;padding-left:6px;white-space:nowrap">Subtrahieren</div>
</body></html>
